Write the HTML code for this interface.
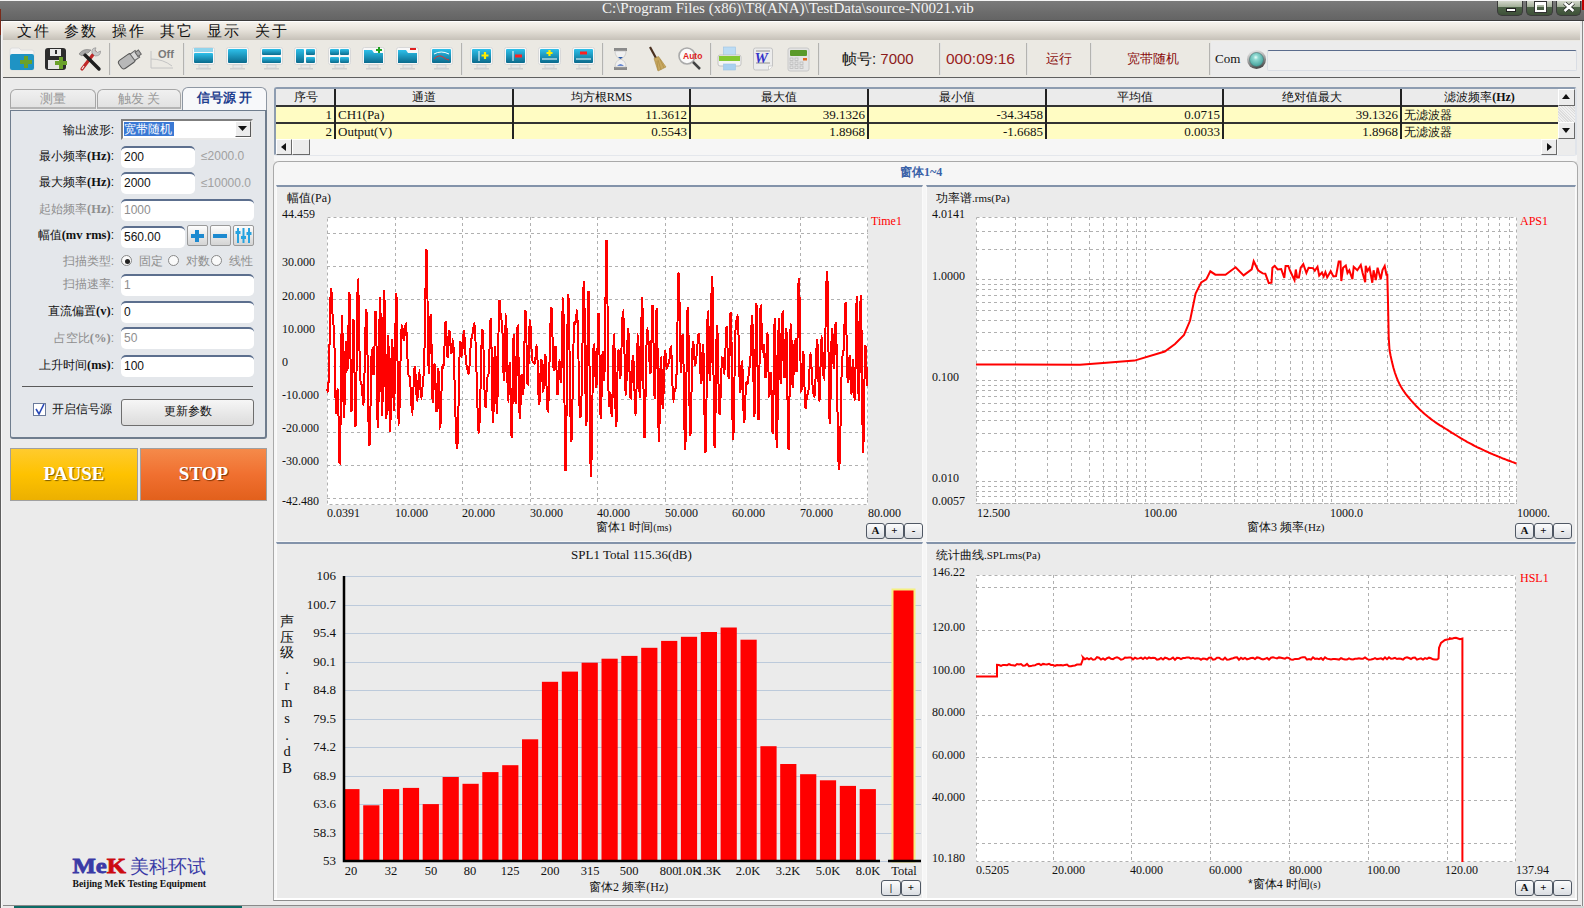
<!DOCTYPE html><html><head><meta charset="utf-8"><style>
html,body{margin:0;padding:0;width:1584px;height:908px;overflow:hidden;position:relative;font-family:"Liberation Sans",sans-serif}
div{box-sizing:content-box}
</style></head><body><div style="position:absolute;left:0px;top:0px;width:1584px;height:908px;background:#ebebeb"></div>
<div style="position:absolute;left:0px;top:0px;width:1584px;height:21px;background:linear-gradient(#7a7a7a,#6c6c6c 60%,#646464);border-top:1px solid #f4f4f4;box-sizing:border-box;border-bottom:1px solid #3c3c3c"></div>
<div style="position:absolute;left:602px;top:-1px;white-space:nowrap;font-family:'Liberation Serif', serif;font-size:15px;line-height:18px;color:#f4f4f4">C:\Program Files (x86)\T8(ANA)\TestData\source-N0021.vib</div>
<div style="position:absolute;left:1497px;top:1px;width:26px;height:15px;background:linear-gradient(#d2d6ca,#a4b09a 40%,#4e6448 42%,#3e5038 100%);border:1px solid #3a3a3a;border-top:none;border-radius:0 0 5px 5px;box-sizing:border-box"></div>
<div style="position:absolute;left:1526px;top:1px;width:27px;height:15px;background:linear-gradient(#d2d6ca,#a4b09a 40%,#4e6448 42%,#3e5038 100%);border:1px solid #3a3a3a;border-top:none;border-radius:0 0 5px 5px;box-sizing:border-box"></div>
<div style="position:absolute;left:1556px;top:1px;width:25px;height:15px;background:linear-gradient(#d2d6ca,#a4b09a 40%,#4e6448 42%,#3e5038 100%);border:1px solid #3a3a3a;border-top:none;border-radius:0 0 5px 5px;box-sizing:border-box"></div>
<div style="position:absolute;left:1506px;top:8px;width:10px;height:4px;background:#fff;border:1px solid #222;box-sizing:border-box"></div>
<div style="position:absolute;left:1535px;top:2px;width:11px;height:10px;border:2px solid #fff;border-top-width:3px;box-sizing:border-box;outline:1px solid #333"></div>
<svg style="position:absolute;left:1563px;top:2px" width="12" height="10"><path d="M1.5 1L10.5 9M10.5 1L1.5 9" stroke="#222" stroke-width="4"/><path d="M1.5 1L10.5 9M10.5 1L1.5 9" stroke="#fff" stroke-width="2.6"/></svg>
<div style="position:absolute;left:1582px;top:0px;width:2px;height:10px;background:#c00000"></div>
<div style="position:absolute;left:0px;top:21px;width:1px;height:887px;background:#5e5e5e"></div>
<div style="position:absolute;left:1px;top:21px;width:1px;height:887px;background:#f6f6f6"></div>
<div style="position:absolute;left:1582px;top:21px;width:1px;height:887px;background:#8a8a8a"></div>
<div style="position:absolute;left:1583px;top:21px;width:1px;height:887px;background:#f0f0f0"></div>
<div style="position:absolute;left:0px;top:9px;width:1px;height:26px;background:#7a2a1a"></div>
<div style="position:absolute;left:3px;top:21px;width:1577px;height:19px;background:linear-gradient(#f7f4ee,#e9e5dd 40%,#c6c1b8);border-top:1px solid #fff;box-sizing:border-box"></div>
<div style="position:absolute;left:17px;top:21px;white-space:nowrap;font-family:'Liberation Sans', sans-serif;font-size:15px;line-height:20px;letter-spacing:2px;color:#111">文件</div>
<div style="position:absolute;left:64px;top:21px;white-space:nowrap;font-family:'Liberation Sans', sans-serif;font-size:15px;line-height:20px;letter-spacing:2px;color:#111">参数</div>
<div style="position:absolute;left:112px;top:21px;white-space:nowrap;font-family:'Liberation Sans', sans-serif;font-size:15px;line-height:20px;letter-spacing:2px;color:#111">操作</div>
<div style="position:absolute;left:160px;top:21px;white-space:nowrap;font-family:'Liberation Sans', sans-serif;font-size:15px;line-height:20px;letter-spacing:2px;color:#111">其它</div>
<div style="position:absolute;left:207px;top:21px;white-space:nowrap;font-family:'Liberation Sans', sans-serif;font-size:15px;line-height:20px;letter-spacing:2px;color:#111">显示</div>
<div style="position:absolute;left:255px;top:21px;white-space:nowrap;font-family:'Liberation Sans', sans-serif;font-size:15px;line-height:20px;letter-spacing:2px;color:#111">关于</div>
<div style="position:absolute;left:3px;top:40px;width:1577px;height:37px;background:#ebe9e3"></div>
<div style="position:absolute;left:3px;top:77px;width:1577px;height:1px;background:#5f5f5f"></div>
<div style="position:absolute;left:1211px;top:41px;width:369px;height:36px;background:#ececec"></div>
<div style="position:absolute;left:109px;top:43px;width:2px;height:32px;background:linear-gradient(90deg,#9c9b97,#fbfbfb)"></div>
<div style="position:absolute;left:183px;top:43px;width:2px;height:32px;background:linear-gradient(90deg,#9c9b97,#fbfbfb)"></div>
<div style="position:absolute;left:461px;top:43px;width:2px;height:32px;background:linear-gradient(90deg,#9c9b97,#fbfbfb)"></div>
<div style="position:absolute;left:602px;top:43px;width:2px;height:32px;background:linear-gradient(90deg,#9c9b97,#fbfbfb)"></div>
<div style="position:absolute;left:710px;top:43px;width:2px;height:32px;background:linear-gradient(90deg,#9c9b97,#fbfbfb)"></div>
<div style="position:absolute;left:818px;top:43px;width:2px;height:32px;background:linear-gradient(90deg,#9c9b97,#fbfbfb)"></div>
<div style="position:absolute;left:939px;top:43px;width:2px;height:32px;background:linear-gradient(90deg,#9c9b97,#fbfbfb)"></div>
<div style="position:absolute;left:1026px;top:43px;width:2px;height:32px;background:linear-gradient(90deg,#9c9b97,#fbfbfb)"></div>
<div style="position:absolute;left:1090px;top:43px;width:2px;height:32px;background:linear-gradient(90deg,#9c9b97,#fbfbfb)"></div>
<div style="position:absolute;left:1209px;top:43px;width:2px;height:32px;background:linear-gradient(90deg,#9c9b97,#fbfbfb)"></div>
<svg style="position:absolute;left:9px;top:47px" width="28" height="24"><path d="M1 3Q1 1 3 1H10L12 3H23Q25 3 25 5V21Q25 23 23 23H3Q1 23 1 21Z" fill="#f4f4f4" stroke="#ddd"/><path d="M1 9Q1 7 3 7H23Q25 7 25 9V21Q25 23 23 23H3Q1 23 1 21Z" fill="#1f93c4"/><path d="M15 9H19V13H23V17H19V21H15V17H11V13H15Z" fill="#6aa12a"/></svg>
<svg style="position:absolute;left:44px;top:47px" width="26" height="24"><rect x="1" y="1" width="21" height="22" rx="3" fill="#2c2c2c"/><rect x="6" y="2" width="11" height="7" fill="#e8e8e8"/><rect x="11" y="3" width="2" height="4" fill="#2c2c2c"/><rect x="4" y="13" width="15" height="9" fill="#e4e4e4"/><path d="M15 10H19V14H23V18H19V22H15V18H11V14H15Z" fill="#6aa12a"/></svg>
<svg style="position:absolute;left:77px;top:47px" width="26" height="25"><path d="M18 5L5 22" stroke="#c02828" stroke-width="3.2" stroke-linecap="round"/><path d="M5 22L7 19" stroke="#f0f0f0" stroke-width="1.2"/><path d="M7 7L22 22" stroke="#1e1e1e" stroke-width="3.4" stroke-linecap="round"/><path d="M2 7Q6 1 14 3L11 6Q8 5 5 9Z" fill="#a8a8a8" stroke="#777" stroke-width="0.6"/><path d="M15 6Q14 1 19 0.8L18 3.5L20.5 5.5L23.5 4Q24 9 18 9Z" fill="#c8c8c8" stroke="#888" stroke-width="0.6"/></svg>
<svg style="position:absolute;left:116px;top:48px" width="28" height="22"><g transform="rotate(-35 14 11)"><rect x="2" y="6" width="16" height="10" rx="3" fill="#b8b8b8" stroke="#555"/><rect x="17" y="7" width="6" height="8" fill="#d8d8d8" stroke="#666"/><rect x="22" y="8.5" width="4" height="5" fill="#aaa" stroke="#666"/></g></svg>
<svg style="position:absolute;left:150px;top:48px" width="28" height="22"><path d="M1 3V20H23" stroke="#c4c4c4" fill="none"/><path d="M1 11Q13 11 22 18" stroke="#c4c4c4" fill="none"/><text x="8" y="10" font-family="Liberation Sans" font-weight="bold" font-size="11" fill="#7a7a7a">Off</text></svg>
<svg style="position:absolute;left:192px;top:47px" width="24" height="25" viewBox="0 0 24 25"><defs><linearGradient id="mg" x1="0" y1="0" x2="0" y2="1"><stop offset="0" stop-color="#2ec0ea"/><stop offset="1" stop-color="#0b6a8c"/></linearGradient></defs><rect x="0.5" y="0.5" width="22" height="17" rx="2" fill="#f8f8f8" stroke="#d8d8d8"/><rect x="2" y="6" width="19" height="10" rx="1" fill="url(#mg)"/><rect x="7" y="18" width="9" height="3" fill="#e8e8e8" stroke="#c8c8c8" stroke-width="0.6"/><rect x="4" y="21" width="15" height="1.5" fill="#d0d0d0"/><path d="M2 2H21M2 4H21" stroke="#2ab0e0" stroke-width="1"/></svg>
<svg style="position:absolute;left:226px;top:47px" width="24" height="25" viewBox="0 0 24 25"><defs><linearGradient id="mg" x1="0" y1="0" x2="0" y2="1"><stop offset="0" stop-color="#2ec0ea"/><stop offset="1" stop-color="#0b6a8c"/></linearGradient></defs><rect x="0.5" y="0.5" width="22" height="17" rx="2" fill="#f8f8f8" stroke="#d8d8d8"/><rect x="2" y="2" width="19" height="14" rx="1" fill="url(#mg)"/><rect x="7" y="18" width="9" height="3" fill="#e8e8e8" stroke="#c8c8c8" stroke-width="0.6"/><rect x="4" y="21" width="15" height="1.5" fill="#d0d0d0"/></svg>
<svg style="position:absolute;left:260px;top:47px" width="24" height="25" viewBox="0 0 24 25"><defs><linearGradient id="mg" x1="0" y1="0" x2="0" y2="1"><stop offset="0" stop-color="#2ec0ea"/><stop offset="1" stop-color="#0b6a8c"/></linearGradient></defs><rect x="0.5" y="0.5" width="22" height="17" rx="2" fill="#f8f8f8" stroke="#d8d8d8"/><rect x="2" y="2" width="19" height="6" rx="1" fill="url(#mg)"/><rect x="2" y="10" width="19" height="6" rx="1" fill="url(#mg)"/><rect x="7" y="18" width="9" height="3" fill="#e8e8e8" stroke="#c8c8c8" stroke-width="0.6"/><rect x="4" y="21" width="15" height="1.5" fill="#d0d0d0"/></svg>
<svg style="position:absolute;left:294px;top:47px" width="24" height="25" viewBox="0 0 24 25"><defs><linearGradient id="mg" x1="0" y1="0" x2="0" y2="1"><stop offset="0" stop-color="#2ec0ea"/><stop offset="1" stop-color="#0b6a8c"/></linearGradient></defs><rect x="0.5" y="0.5" width="22" height="17" rx="2" fill="#f8f8f8" stroke="#d8d8d8"/><rect x="2" y="2" width="8" height="14" rx="1" fill="url(#mg)"/><rect x="12" y="2" width="9" height="6" rx="1" fill="url(#mg)"/><rect x="12" y="10" width="9" height="6" rx="1" fill="url(#mg)"/><rect x="7" y="18" width="9" height="3" fill="#e8e8e8" stroke="#c8c8c8" stroke-width="0.6"/><rect x="4" y="21" width="15" height="1.5" fill="#d0d0d0"/></svg>
<svg style="position:absolute;left:328px;top:47px" width="24" height="25" viewBox="0 0 24 25"><defs><linearGradient id="mg" x1="0" y1="0" x2="0" y2="1"><stop offset="0" stop-color="#2ec0ea"/><stop offset="1" stop-color="#0b6a8c"/></linearGradient></defs><rect x="0.5" y="0.5" width="22" height="17" rx="2" fill="#f8f8f8" stroke="#d8d8d8"/><rect x="2" y="2" width="9" height="6" rx="1" fill="url(#mg)"/><rect x="12" y="2" width="9" height="6" rx="1" fill="url(#mg)"/><rect x="2" y="10" width="9" height="6" rx="1" fill="url(#mg)"/><rect x="12" y="10" width="9" height="6" rx="1" fill="url(#mg)"/><rect x="7" y="18" width="9" height="3" fill="#e8e8e8" stroke="#c8c8c8" stroke-width="0.6"/><rect x="4" y="21" width="15" height="1.5" fill="#d0d0d0"/></svg>
<svg style="position:absolute;left:362px;top:47px" width="24" height="25" viewBox="0 0 24 25"><defs><linearGradient id="mg" x1="0" y1="0" x2="0" y2="1"><stop offset="0" stop-color="#2ec0ea"/><stop offset="1" stop-color="#0b6a8c"/></linearGradient></defs><rect x="0.5" y="0.5" width="22" height="17" rx="2" fill="#f8f8f8" stroke="#d8d8d8"/><path d="M2 3H10L12 6H21V16H2Z" fill="url(#mg)"/><rect x="7" y="18" width="9" height="3" fill="#e8e8e8" stroke="#c8c8c8" stroke-width="0.6"/><rect x="4" y="21" width="15" height="1.5" fill="#d0d0d0"/><path d="M17 0V6M14 3H20" stroke="#20a020" stroke-width="2"/></svg>
<svg style="position:absolute;left:396px;top:47px" width="24" height="25" viewBox="0 0 24 25"><defs><linearGradient id="mg" x1="0" y1="0" x2="0" y2="1"><stop offset="0" stop-color="#2ec0ea"/><stop offset="1" stop-color="#0b6a8c"/></linearGradient></defs><rect x="0.5" y="0.5" width="22" height="17" rx="2" fill="#f8f8f8" stroke="#d8d8d8"/><path d="M2 3H10L12 6H21V16H2Z" fill="url(#mg)"/><rect x="7" y="18" width="9" height="3" fill="#e8e8e8" stroke="#c8c8c8" stroke-width="0.6"/><rect x="4" y="21" width="15" height="1.5" fill="#d0d0d0"/><path d="M14 2H20" stroke="#e02020" stroke-width="2"/></svg>
<svg style="position:absolute;left:430px;top:47px" width="24" height="25" viewBox="0 0 24 25"><defs><linearGradient id="mg" x1="0" y1="0" x2="0" y2="1"><stop offset="0" stop-color="#2ec0ea"/><stop offset="1" stop-color="#0b6a8c"/></linearGradient></defs><rect x="0.5" y="0.5" width="22" height="17" rx="2" fill="#f8f8f8" stroke="#d8d8d8"/><rect x="2" y="2" width="19" height="14" rx="1" fill="url(#mg)"/><rect x="7" y="18" width="9" height="3" fill="#e8e8e8" stroke="#c8c8c8" stroke-width="0.6"/><rect x="4" y="21" width="15" height="1.5" fill="#d0d0d0"/><path d="M4 7Q11 3 19 7" stroke="#fff" fill="none"/><path d="M4 12Q9 7 13 10T19 13" stroke="#e03030" fill="none"/></svg>
<svg style="position:absolute;left:470px;top:47px" width="24" height="25" viewBox="0 0 24 25"><defs><linearGradient id="mg" x1="0" y1="0" x2="0" y2="1"><stop offset="0" stop-color="#2ec0ea"/><stop offset="1" stop-color="#0b6a8c"/></linearGradient></defs><rect x="0.5" y="0.5" width="22" height="17" rx="2" fill="#f8f8f8" stroke="#d8d8d8"/><rect x="2" y="2" width="19" height="14" rx="1" fill="url(#mg)"/><rect x="7" y="18" width="9" height="3" fill="#e8e8e8" stroke="#c8c8c8" stroke-width="0.6"/><rect x="4" y="21" width="15" height="1.5" fill="#d0d0d0"/><path d="M9 4V14" stroke="#fff"/><path d="M15 5V12M11.5 8.5H18.5" stroke="#ffee00" stroke-width="2.2"/></svg>
<svg style="position:absolute;left:504px;top:47px" width="24" height="25" viewBox="0 0 24 25"><defs><linearGradient id="mg" x1="0" y1="0" x2="0" y2="1"><stop offset="0" stop-color="#2ec0ea"/><stop offset="1" stop-color="#0b6a8c"/></linearGradient></defs><rect x="0.5" y="0.5" width="22" height="17" rx="2" fill="#f8f8f8" stroke="#d8d8d8"/><rect x="2" y="2" width="19" height="14" rx="1" fill="url(#mg)"/><rect x="7" y="18" width="9" height="3" fill="#e8e8e8" stroke="#c8c8c8" stroke-width="0.6"/><rect x="4" y="21" width="15" height="1.5" fill="#d0d0d0"/><path d="M9 4V14" stroke="#fff"/><path d="M11 9H18" stroke="#ff2020" stroke-width="3"/></svg>
<svg style="position:absolute;left:538px;top:47px" width="24" height="25" viewBox="0 0 24 25"><defs><linearGradient id="mg" x1="0" y1="0" x2="0" y2="1"><stop offset="0" stop-color="#2ec0ea"/><stop offset="1" stop-color="#0b6a8c"/></linearGradient></defs><rect x="0.5" y="0.5" width="22" height="17" rx="2" fill="#f8f8f8" stroke="#d8d8d8"/><rect x="2" y="2" width="19" height="14" rx="1" fill="url(#mg)"/><rect x="7" y="18" width="9" height="3" fill="#e8e8e8" stroke="#c8c8c8" stroke-width="0.6"/><rect x="4" y="21" width="15" height="1.5" fill="#d0d0d0"/><path d="M4 12H19" stroke="#fff"/><path d="M11.5 3V9M8.5 6H14.5" stroke="#ffee00" stroke-width="2.2"/></svg>
<svg style="position:absolute;left:572px;top:47px" width="24" height="25" viewBox="0 0 24 25"><defs><linearGradient id="mg" x1="0" y1="0" x2="0" y2="1"><stop offset="0" stop-color="#2ec0ea"/><stop offset="1" stop-color="#0b6a8c"/></linearGradient></defs><rect x="0.5" y="0.5" width="22" height="17" rx="2" fill="#f8f8f8" stroke="#d8d8d8"/><rect x="2" y="2" width="19" height="14" rx="1" fill="url(#mg)"/><rect x="7" y="18" width="9" height="3" fill="#e8e8e8" stroke="#c8c8c8" stroke-width="0.6"/><rect x="4" y="21" width="15" height="1.5" fill="#d0d0d0"/><path d="M4 12H19" stroke="#fff"/><path d="M8 6H15" stroke="#ff2020" stroke-width="3"/></svg>
<svg style="position:absolute;left:612px;top:47px" width="18" height="24"><rect x="2" y="1" width="13" height="3" fill="#8a8a8a"/><rect x="2" y="20" width="13" height="3" fill="#8a8a8a"/><path d="M3 4H14Q14 10 8.5 12Q3 10 3 4ZM3 20H14Q14 14 8.5 12Q3 14 3 20Z" fill="#f0f0f0" stroke="#bbb" stroke-width="0.6"/><path d="M6 10H11L8.5 12Z" fill="#2a5aa8"/><path d="M5 19H12Q10 17 8.5 17Q7 17 5 19Z" fill="#6a8ad0"/></svg>
<svg style="position:absolute;left:646px;top:45px" width="22" height="27"><path d="M4 2L10.5 14" stroke="#4a3020" stroke-width="2.2"/><path d="M8 13.5L12.5 11.5L20 22L12 26Z" fill="#c8a860" stroke="#a88840" stroke-width="0.6"/><path d="M12 15L15 25M11 16L12 25M14 14L18 23" stroke="#a88840" stroke-width="0.6"/></svg>
<svg style="position:absolute;left:677px;top:46px" width="26" height="26"><circle cx="10" cy="10" r="8" fill="#fafafa" stroke="#aaa" stroke-width="1.6"/><path d="M16 16L23 23" stroke="#444" stroke-width="2.5"/><text x="6" y="13" font-family="Liberation Sans" font-weight="bold" font-size="8.5" fill="#e02020">Auto</text></svg>
<svg style="position:absolute;left:717px;top:46px" width="26" height="26"><rect x="6.5" y="1" width="12" height="9" fill="#bcdcf4" stroke="#9cc4e4" stroke-width="0.6"/><rect x="1" y="9" width="23" height="11" rx="2" fill="#f4f4f4" stroke="#b8b8b8" stroke-width="0.8"/><rect x="2" y="10" width="21" height="5" fill="#84c832"/><rect x="6.5" y="18" width="12" height="6" fill="#a8d0f0" stroke="#9cc4e4" stroke-width="0.6"/></svg>
<svg style="position:absolute;left:752px;top:47px" width="24" height="25"><path d="M1.5 3Q1.5 1 3.5 1H18.5Q20.5 1 20.5 3V19L16.5 23H3.5Q1.5 23 1.5 21Z" fill="#ececec" stroke="#c4c4c4"/><path d="M16.5 23V19H20.5" fill="#fff" stroke="#c4c4c4" stroke-width="0.8"/><path d="M4 4H18M4 16H18" stroke="#888" stroke-width="0.9"/><text x="2.5" y="15.5" font-family="Liberation Serif" font-style="italic" font-weight="bold" font-size="15" fill="#3434c8">W</text></svg>
<svg style="position:absolute;left:787px;top:47px" width="24" height="25"><rect x="1" y="1" width="21" height="23" rx="2" fill="#e4e4e4" stroke="#c8c8c8"/><rect x="3" y="3" width="17" height="6" rx="1" fill="#5a9a2a"/><g fill="none" stroke="#bbb" stroke-width="0.8"><rect x="3" y="11" width="3" height="2.5"/><rect x="8" y="11" width="3" height="2.5"/><rect x="3" y="15" width="3" height="2.5"/><rect x="8" y="15" width="3" height="2.5"/><rect x="13" y="15" width="3" height="2.5"/><rect x="3" y="19" width="3" height="2.5"/><rect x="8" y="19" width="3" height="2.5"/><rect x="13" y="19" width="3" height="2.5"/></g><rect x="16" y="11" width="4" height="2.5" fill="#e06a20"/></svg>
<div style="position:absolute;left:842px;top:49px;white-space:nowrap;font-family:'Liberation Sans', sans-serif;font-size:15px;line-height:20px;color:#111">帧号: <span style="color:#8b1a1a">7000</span></div>
<div style="position:absolute;left:946px;top:49px;white-space:nowrap;font-family:'Liberation Sans', sans-serif;font-size:15.5px;line-height:20px;color:#9a2222">000:09:16</div>
<div style="position:absolute;left:1046px;top:50px;white-space:nowrap;font-family:'Liberation Sans', sans-serif;font-size:13px;line-height:18px;color:#8a0c0c">运行</div>
<div style="position:absolute;left:1127px;top:50px;white-space:nowrap;font-family:'Liberation Sans', sans-serif;font-size:13px;line-height:18px;color:#8a0c0c">宽带随机</div>
<div style="position:absolute;left:1215px;top:51px;white-space:nowrap;font-family:'Liberation Serif', serif;font-size:13px;line-height:16px;color:#111">Com</div>
<svg style="position:absolute;left:1246px;top:49px" width="21" height="21"><defs><linearGradient id="ledr" x1="0" y1="0" x2="0.3" y2="1"><stop offset="0" stop-color="#f4f4f4"/><stop offset="0.5" stop-color="#b0b0b0"/><stop offset="1" stop-color="#505050"/></linearGradient><radialGradient id="ledc" cx="0.45" cy="0.35" r="0.7"><stop offset="0" stop-color="#e8fffc"/><stop offset="0.25" stop-color="#8ed8d0"/><stop offset="1" stop-color="#3a9a94"/></radialGradient></defs><circle cx="10.5" cy="10.5" r="9.5" fill="url(#ledr)"/><circle cx="10.5" cy="10.5" r="7" fill="url(#ledc)" stroke="#4a6a6a" stroke-width="0.6"/></svg>
<div style="position:absolute;left:1267px;top:50px;width:310px;height:21px;background:#efefef;border:1px solid #d9dde4;border-top:1px solid #5a6c8c;border-radius:2px;box-sizing:border-box"></div>
<div style="position:absolute;left:242px;top:906px;width:1342px;height:2px;background:#d4d4d4"></div>
<div style="position:absolute;left:14px;top:906px;width:228px;height:2px;background:#0d6b66"></div>
<div style="position:absolute;left:3px;top:905px;width:1578px;height:1px;background:#8a8a8a"></div>
<div style="position:absolute;left:10px;top:89px;width:86px;height:20px;background:linear-gradient(#f0f0f0,#e2e2e2);border:1px solid #a6a6a6;border-bottom:2px solid #b5b5b5;border-radius:6px 6px 0 0;box-sizing:border-box"></div>
<div style="position:absolute;left:10px;top:89px;width:86px;text-align:center;white-space:nowrap;font-family:'Liberation Sans', sans-serif;font-size:13px;line-height:20px;color:#9a9a9a">测量</div>
<div style="position:absolute;left:97px;top:89px;width:84px;height:20px;background:linear-gradient(#f0f0f0,#e2e2e2);border:1px solid #a6a6a6;border-bottom:2px solid #b5b5b5;border-radius:6px 6px 0 0;box-sizing:border-box"></div>
<div style="position:absolute;left:97px;top:89px;width:84px;text-align:center;white-space:nowrap;font-family:'Liberation Sans', sans-serif;font-size:13px;line-height:20px;color:#9a9a9a">触发 关</div>
<div style="position:absolute;left:182px;top:87px;width:85px;height:23px;background:#f7f8fa;border:1px solid #8e97a3;border-bottom:none;border-radius:6px 6px 0 0;box-sizing:border-box"></div>
<div style="position:absolute;left:182px;top:88px;width:85px;text-align:center;white-space:nowrap;font-family:'Liberation Sans', sans-serif;font-size:13px;line-height:20px;color:#1f3f8f;font-weight:bold">信号源 开</div>
<div style="position:absolute;left:10px;top:110px;width:257px;height:329px;background:#e4e7eb;border:1px solid #6f7d8e;border-right:2px solid #6f7d8e;border-bottom:2px solid #6f7d8e;border-radius:0 0 3px 3px;box-sizing:border-box"></div>
<div style="position:absolute;left:0px;top:122px;width:114px;text-align:right;white-space:nowrap;font-family:'Liberation Sans', sans-serif;font-size:12px;line-height:16px;color:#111">输出波形:</div>
<div style="position:absolute;left:121px;top:119px;width:132px;height:21px;background:#fff;border:2px solid #7f7f7f;border-right-color:#e8e8e8;border-bottom-color:#e8e8e8;box-sizing:border-box"></div>
<div style="position:absolute;left:124px;top:122px;width:50px;height:14px;background:#3a78d4"></div>
<div style="position:absolute;left:124px;top:121px;white-space:nowrap;font-family:'Liberation Sans', sans-serif;font-size:12px;line-height:16px;color:#fff">宽带随机</div>
<div style="position:absolute;left:235px;top:121px;width:16px;height:16px;background:#ececec;border:1px solid #fff;border-right-color:#5a5a5a;border-bottom-color:#5a5a5a;box-sizing:border-box"></div>
<svg style="position:absolute;left:238px;top:126px" width="10" height="6"><path d="M0 0H9L4.5 5Z" fill="#111"/></svg>
<div style="position:absolute;left:0px;top:148px;width:114px;text-align:right;white-space:nowrap;font-family:'Liberation Sans', sans-serif;font-size:12px;line-height:16px;color:#111">最小频率<span style="font-family:'Liberation Serif',serif;font-weight:bold;font-size:12.5px">(Hz)</span>:</div>
<div style="position:absolute;left:121px;top:146px;width:74px;height:22px;background:#fff;border-top:2px solid #5c6f8e;border-radius:5px;box-sizing:border-box"></div>
<div style="position:absolute;left:124px;top:149px;white-space:nowrap;font-family:'Liberation Sans', sans-serif;font-size:12px;line-height:16px;color:#111">200</div>
<div style="position:absolute;left:201px;top:148px;white-space:nowrap;font-family:'Liberation Sans', sans-serif;font-size:12px;line-height:16px;color:#a0a0a0">≤2000.0</div>
<div style="position:absolute;left:0px;top:174px;width:114px;text-align:right;white-space:nowrap;font-family:'Liberation Sans', sans-serif;font-size:12px;line-height:16px;color:#111">最大频率<span style="font-family:'Liberation Serif',serif;font-weight:bold;font-size:12.5px">(Hz)</span>:</div>
<div style="position:absolute;left:121px;top:172px;width:74px;height:22px;background:#fff;border-top:2px solid #5c6f8e;border-radius:5px;box-sizing:border-box"></div>
<div style="position:absolute;left:124px;top:175px;white-space:nowrap;font-family:'Liberation Sans', sans-serif;font-size:12px;line-height:16px;color:#111">2000</div>
<div style="position:absolute;left:201px;top:175px;white-space:nowrap;font-family:'Liberation Sans', sans-serif;font-size:12px;line-height:16px;color:#a0a0a0">≤10000.0</div>
<div style="position:absolute;left:0px;top:201px;width:114px;text-align:right;white-space:nowrap;font-family:'Liberation Sans', sans-serif;font-size:12px;line-height:16px;color:#8e8e8e">起始频率<span style="font-family:'Liberation Serif',serif;font-weight:bold;font-size:12.5px">(Hz)</span>:</div>
<div style="position:absolute;left:121px;top:199px;width:133px;height:22px;background:#fff;border-top:2px solid #5c6f8e;border-radius:5px;box-sizing:border-box"></div>
<div style="position:absolute;left:124px;top:202px;white-space:nowrap;font-family:'Liberation Sans', sans-serif;font-size:12px;line-height:16px;color:#8e8e8e">1000</div>
<div style="position:absolute;left:0px;top:227px;width:114px;text-align:right;white-space:nowrap;font-family:'Liberation Sans', sans-serif;font-size:12px;line-height:16px;color:#111">幅值<span style="font-family:'Liberation Serif',serif;font-weight:bold;font-size:12.5px">(mv rms)</span>:</div>
<div style="position:absolute;left:121px;top:226px;width:64px;height:22px;background:#fff;border-top:2px solid #5c6f8e;border-radius:5px;box-sizing:border-box"></div>
<div style="position:absolute;left:124px;top:229px;white-space:nowrap;font-family:'Liberation Sans', sans-serif;font-size:12px;line-height:16px;color:#111">560.00</div>
<div style="position:absolute;left:187px;top:225px;width:21px;height:21px;background:linear-gradient(#fdfdfd,#d4d4d4);border:1px solid #9a9a9a;border-radius:2px;box-sizing:border-box"></div>
<div style="position:absolute;left:210px;top:225px;width:21px;height:21px;background:linear-gradient(#fdfdfd,#d4d4d4);border:1px solid #9a9a9a;border-radius:2px;box-sizing:border-box"></div>
<div style="position:absolute;left:233px;top:225px;width:21px;height:21px;background:linear-gradient(#fdfdfd,#d4d4d4);border:1px solid #9a9a9a;border-radius:2px;box-sizing:border-box"></div>
<div style="position:absolute;left:191px;top:234px;width:13px;height:4px;background:#1d8ad0"></div>
<div style="position:absolute;left:195px;top:230px;width:4px;height:12px;background:#1d8ad0"></div>
<div style="position:absolute;left:213px;top:234px;width:14px;height:4px;background:#1d8ad0"></div>
<svg style="position:absolute;left:235px;top:227px" width="17" height="17"><g stroke="#27a3e0" stroke-width="2"><path d="M3 1V16M8.5 1V16M14 1V16"/></g><g fill="#27a3e0"><rect x="0.5" y="4" width="5" height="3"/><rect x="6" y="9" width="5" height="3"/><rect x="11.5" y="5" width="5" height="3"/></g></svg>
<div style="position:absolute;left:0px;top:253px;width:114px;text-align:right;white-space:nowrap;font-family:'Liberation Sans', sans-serif;font-size:12px;line-height:16px;color:#8e8e8e">扫描类型:</div>
<div style="position:absolute;left:121px;top:255px;width:11px;height:11px;background:#fafafa;border:1px solid #888;border-radius:50%;box-sizing:border-box"><div style="position:absolute;left:3px;top:3px;width:5px;height:5px;border-radius:50%;background:#222"></div></div>
<div style="position:absolute;left:139px;top:253px;white-space:nowrap;font-family:'Liberation Sans', sans-serif;font-size:12px;line-height:16px;color:#8e8e8e">固定</div>
<div style="position:absolute;left:168px;top:255px;width:11px;height:11px;background:#fafafa;border:1px solid #888;border-radius:50%;box-sizing:border-box"></div>
<div style="position:absolute;left:186px;top:253px;white-space:nowrap;font-family:'Liberation Sans', sans-serif;font-size:12px;line-height:16px;color:#8e8e8e">对数</div>
<div style="position:absolute;left:211px;top:255px;width:11px;height:11px;background:#fafafa;border:1px solid #888;border-radius:50%;box-sizing:border-box"></div>
<div style="position:absolute;left:229px;top:253px;white-space:nowrap;font-family:'Liberation Sans', sans-serif;font-size:12px;line-height:16px;color:#8e8e8e">线性</div>
<div style="position:absolute;left:0px;top:276px;width:114px;text-align:right;white-space:nowrap;font-family:'Liberation Sans', sans-serif;font-size:12px;line-height:16px;color:#8e8e8e">扫描速率:</div>
<div style="position:absolute;left:121px;top:274px;width:133px;height:22px;background:#fff;border-top:2px solid #5c6f8e;border-radius:5px;box-sizing:border-box"></div>
<div style="position:absolute;left:124px;top:277px;white-space:nowrap;font-family:'Liberation Sans', sans-serif;font-size:12px;line-height:16px;color:#8e8e8e">1</div>
<div style="position:absolute;left:0px;top:303px;width:114px;text-align:right;white-space:nowrap;font-family:'Liberation Sans', sans-serif;font-size:12px;line-height:16px;color:#111">直流偏置<span style="font-family:'Liberation Serif',serif;font-weight:bold;font-size:12.5px">(v)</span>:</div>
<div style="position:absolute;left:121px;top:301px;width:133px;height:22px;background:#fff;border-top:2px solid #5c6f8e;border-radius:5px;box-sizing:border-box"></div>
<div style="position:absolute;left:124px;top:304px;white-space:nowrap;font-family:'Liberation Sans', sans-serif;font-size:12px;line-height:16px;color:#111">0</div>
<div style="position:absolute;left:0px;top:330px;width:114px;text-align:right;white-space:nowrap;font-family:'Liberation Sans', sans-serif;font-size:12px;line-height:16px;color:#8e8e8e">占空比<span style="font-family:'Liberation Serif',serif;font-weight:bold;font-size:12.5px">(%)</span>:</div>
<div style="position:absolute;left:121px;top:327px;width:133px;height:22px;background:#fff;border-top:2px solid #5c6f8e;border-radius:5px;box-sizing:border-box"></div>
<div style="position:absolute;left:124px;top:330px;white-space:nowrap;font-family:'Liberation Sans', sans-serif;font-size:12px;line-height:16px;color:#8e8e8e">50</div>
<div style="position:absolute;left:0px;top:357px;width:114px;text-align:right;white-space:nowrap;font-family:'Liberation Sans', sans-serif;font-size:12px;line-height:16px;color:#111">上升时间<span style="font-family:'Liberation Serif',serif;font-weight:bold;font-size:12.5px">(ms)</span>:</div>
<div style="position:absolute;left:121px;top:355px;width:133px;height:22px;background:#fff;border-top:2px solid #5c6f8e;border-radius:5px;box-sizing:border-box"></div>
<div style="position:absolute;left:124px;top:358px;white-space:nowrap;font-family:'Liberation Sans', sans-serif;font-size:12px;line-height:16px;color:#111">100</div>
<div style="position:absolute;left:22px;top:386px;width:231px;height:1px;background:#5a5a5a"></div>
<div style="position:absolute;left:33px;top:403px;width:13px;height:13px;background:#fff;border:1px solid #6a7a9a;box-sizing:border-box"></div>
<svg style="position:absolute;left:35px;top:404px" width="10" height="11"><path d="M1 5L4 10L9 0" stroke="#2a4ab8" stroke-width="1.6" fill="none"/></svg>
<div style="position:absolute;left:52px;top:401px;white-space:nowrap;font-family:'Liberation Sans', sans-serif;font-size:12px;line-height:16px;color:#111">开启信号源</div>
<div style="position:absolute;left:121px;top:399px;width:133px;height:27px;background:linear-gradient(#f6f6f6,#dcdcdc);border:1px solid #6e6e6e;border-radius:3px;box-sizing:border-box"></div>
<div style="position:absolute;left:121px;top:403px;width:133px;text-align:center;white-space:nowrap;font-family:'Liberation Sans', sans-serif;font-size:12px;line-height:16px;color:#111">更新参数</div>
<div style="position:absolute;left:10px;top:448px;width:128px;height:53px;background:linear-gradient(#ffcb2e,#fec200 50%,#ecb000);border:1px solid #a0a0a0;box-sizing:border-box"></div>
<div style="position:absolute;left:10px;top:461px;width:128px;text-align:center;white-space:nowrap;font-family:'Liberation Serif', serif;font-weight:bold;font-size:19px;line-height:26px;color:#fff;text-shadow:1px 1px 1px #7a5a00">PAUSE</div>
<div style="position:absolute;left:140px;top:448px;width:127px;height:53px;background:linear-gradient(#f58a4a,#f07030 50%,#e2601c);border:1px solid #a0a0a0;box-sizing:border-box"></div>
<div style="position:absolute;left:140px;top:461px;width:127px;text-align:center;white-space:nowrap;font-family:'Liberation Serif', serif;font-weight:bold;font-size:19px;line-height:26px;color:#fff;text-shadow:1px 1px 1px #7a3000">STOP</div>
<svg style="position:absolute;left:70px;top:848px" width="145" height="45"><text x="2.5" y="25" font-family="Liberation Serif" font-weight="bold" font-size="22" textLength="53.5" lengthAdjust="spacingAndGlyphs" fill="#3a3aa6" stroke="#3a3aa6" stroke-width="0.8"><tspan>Me</tspan><tspan fill="#cc0a10" stroke="#cc0a10">K</tspan></text><text x="60" y="25" font-family="Liberation Serif" font-size="19" textLength="76" lengthAdjust="spacingAndGlyphs" fill="#3a3aa6">美科环试</text><text x="2.5" y="39" font-family="Liberation Serif" font-weight="bold" font-size="10.5" textLength="133.5" lengthAdjust="spacingAndGlyphs" fill="#111">Beijing MeK Testing Equipment</text></svg>
<div style="position:absolute;left:274px;top:155px;width:1303px;height:6px;background:#f6f6f6"></div>
<div style="position:absolute;left:274px;top:87px;width:1303px;height:69px;background:#f6f6f6;border:2px solid #8d9cb0;border-right-color:#e0e4ea;border-bottom-color:#e4e7ec;border-radius:3px;box-sizing:border-box"></div>
<div style="position:absolute;left:276px;top:89px;width:1282px;height:17px;background:#ebebeb"></div>
<div style="position:absolute;left:276px;top:106px;width:1282px;height:33px;background:#fffcc3"></div>
<div style="position:absolute;left:276px;top:89px;width:59px;text-align:center;white-space:nowrap;font-family:'Liberation Sans', sans-serif;font-size:12px;line-height:16px;color:#111">序号</div>
<div style="position:absolute;left:335px;top:89px;width:178px;text-align:center;white-space:nowrap;font-family:'Liberation Sans', sans-serif;font-size:12px;line-height:16px;color:#111">通道</div>
<div style="position:absolute;left:513px;top:89px;width:177px;text-align:center;white-space:nowrap;font-family:'Liberation Sans', sans-serif;font-size:12px;line-height:16px;color:#111">均方根<span style="font-family:'Liberation Serif',serif">RMS</span></div>
<div style="position:absolute;left:690px;top:89px;width:178px;text-align:center;white-space:nowrap;font-family:'Liberation Sans', sans-serif;font-size:12px;line-height:16px;color:#111">最大值</div>
<div style="position:absolute;left:868px;top:89px;width:178px;text-align:center;white-space:nowrap;font-family:'Liberation Sans', sans-serif;font-size:12px;line-height:16px;color:#111">最小值</div>
<div style="position:absolute;left:1046px;top:89px;width:177px;text-align:center;white-space:nowrap;font-family:'Liberation Sans', sans-serif;font-size:12px;line-height:16px;color:#111">平均值</div>
<div style="position:absolute;left:1223px;top:89px;width:178px;text-align:center;white-space:nowrap;font-family:'Liberation Sans', sans-serif;font-size:12px;line-height:16px;color:#111">绝对值最大</div>
<div style="position:absolute;left:1401px;top:89px;width:157px;text-align:center;white-space:nowrap;font-family:'Liberation Sans', sans-serif;font-size:12px;line-height:16px;color:#111">滤波频率<span style="font-family:'Liberation Serif',serif;font-weight:bold">(Hz)</span></div>
<div style="position:absolute;left:276px;top:105px;width:1282px;height:2px;background:#333"></div>
<div style="position:absolute;left:276px;top:122px;width:1282px;height:2px;background:#333"></div>
<div style="position:absolute;left:334px;top:89px;width:2px;height:50px;background:#222"></div>
<div style="position:absolute;left:512px;top:89px;width:2px;height:50px;background:#222"></div>
<div style="position:absolute;left:689px;top:89px;width:2px;height:50px;background:#222"></div>
<div style="position:absolute;left:867px;top:89px;width:2px;height:50px;background:#222"></div>
<div style="position:absolute;left:1045px;top:89px;width:2px;height:50px;background:#222"></div>
<div style="position:absolute;left:1222px;top:89px;width:2px;height:50px;background:#222"></div>
<div style="position:absolute;left:1400px;top:89px;width:2px;height:50px;background:#222"></div>
<div style="position:absolute;left:276px;top:107px;width:56px;text-align:right;white-space:nowrap;font-family:'Liberation Serif', serif;font-size:13px;line-height:16px;color:#111">1</div>
<div style="position:absolute;left:338px;top:107px;white-space:nowrap;font-family:'Liberation Serif', serif;font-size:13px;line-height:16px;color:#111">CH1(Pa)</div>
<div style="position:absolute;left:513px;top:107px;width:174px;text-align:right;white-space:nowrap;font-family:'Liberation Serif', serif;font-size:13px;line-height:16px;color:#111">11.3612</div>
<div style="position:absolute;left:690px;top:107px;width:175px;text-align:right;white-space:nowrap;font-family:'Liberation Serif', serif;font-size:13px;line-height:16px;color:#111">39.1326</div>
<div style="position:absolute;left:868px;top:107px;width:175px;text-align:right;white-space:nowrap;font-family:'Liberation Serif', serif;font-size:13px;line-height:16px;color:#111">-34.3458</div>
<div style="position:absolute;left:1046px;top:107px;width:174px;text-align:right;white-space:nowrap;font-family:'Liberation Serif', serif;font-size:13px;line-height:16px;color:#111">0.0715</div>
<div style="position:absolute;left:1223px;top:107px;width:175px;text-align:right;white-space:nowrap;font-family:'Liberation Serif', serif;font-size:13px;line-height:16px;color:#111">39.1326</div>
<div style="position:absolute;left:1404px;top:107px;white-space:nowrap;font-family:'Liberation Sans', sans-serif;font-size:12px;line-height:16px;color:#111">无滤波器</div>
<div style="position:absolute;left:276px;top:124px;width:56px;text-align:right;white-space:nowrap;font-family:'Liberation Serif', serif;font-size:13px;line-height:16px;color:#111">2</div>
<div style="position:absolute;left:338px;top:124px;white-space:nowrap;font-family:'Liberation Serif', serif;font-size:13px;line-height:16px;color:#111">Output(V)</div>
<div style="position:absolute;left:513px;top:124px;width:174px;text-align:right;white-space:nowrap;font-family:'Liberation Serif', serif;font-size:13px;line-height:16px;color:#111">0.5543</div>
<div style="position:absolute;left:690px;top:124px;width:175px;text-align:right;white-space:nowrap;font-family:'Liberation Serif', serif;font-size:13px;line-height:16px;color:#111">1.8968</div>
<div style="position:absolute;left:868px;top:124px;width:175px;text-align:right;white-space:nowrap;font-family:'Liberation Serif', serif;font-size:13px;line-height:16px;color:#111">-1.6685</div>
<div style="position:absolute;left:1046px;top:124px;width:174px;text-align:right;white-space:nowrap;font-family:'Liberation Serif', serif;font-size:13px;line-height:16px;color:#111">0.0033</div>
<div style="position:absolute;left:1223px;top:124px;width:175px;text-align:right;white-space:nowrap;font-family:'Liberation Serif', serif;font-size:13px;line-height:16px;color:#111">1.8968</div>
<div style="position:absolute;left:1404px;top:124px;white-space:nowrap;font-family:'Liberation Sans', sans-serif;font-size:12px;line-height:16px;color:#111">无滤波器</div>
<div style="position:absolute;left:1558px;top:89px;width:17px;height:50px;background:repeating-linear-gradient(45deg,#f0f0f0 0 1px,#dcdcdc 1px 2px)"></div>
<div style="position:absolute;left:1558px;top:89px;width:17px;height:17px;background:#ececec;border:1px solid #fff;border-right-color:#6a6a6a;border-bottom-color:#6a6a6a;box-sizing:border-box"></div>
<svg style="position:absolute;left:1558px;top:89px" width="17" height="17"><path d="M4 10H12L8 5Z" fill="#111"/></svg>
<div style="position:absolute;left:1558px;top:122px;width:17px;height:17px;background:#ececec;border:1px solid #fff;border-right-color:#6a6a6a;border-bottom-color:#6a6a6a;box-sizing:border-box"></div>
<svg style="position:absolute;left:1558px;top:122px" width="17" height="17"><path d="M4 6H12L8 11Z" fill="#111"/></svg>
<div style="position:absolute;left:276px;top:139px;width:1282px;height:16px;background:#f6f6f6"></div>
<div style="position:absolute;left:276px;top:139px;width:16px;height:16px;background:#ececec;border:1px solid #fff;border-right-color:#6a6a6a;border-bottom-color:#6a6a6a;box-sizing:border-box"></div>
<svg style="position:absolute;left:276px;top:139px" width="16" height="16"><path d="M10 4V12L5 8Z" fill="#111"/></svg>
<div style="position:absolute;left:292px;top:139px;width:18px;height:16px;background:#ececec;border:1px solid #fff;border-right-color:#6a6a6a;border-bottom-color:#6a6a6a;box-sizing:border-box"></div>
<div style="position:absolute;left:1541px;top:139px;width:16px;height:16px;background:#ececec;border:1px solid #fff;border-right-color:#6a6a6a;border-bottom-color:#6a6a6a;box-sizing:border-box"></div>
<svg style="position:absolute;left:1541px;top:139px" width="16" height="16"><path d="M6 4V12L11 8Z" fill="#111"/></svg>
<div style="position:absolute;left:1558px;top:139px;width:17px;height:16px;background:#ececec"></div>
<div style="position:absolute;left:273px;top:161px;width:1305px;height:740px;background:#f6f6f6;border:1px solid #a9a9a9;border-bottom:1px solid #8c8c8c;border-radius:6px 6px 0 0;box-sizing:border-box"></div>
<div style="position:absolute;left:900px;top:163px;white-space:nowrap;font-family:'Liberation Sans', sans-serif;font-size:12px;line-height:18px;color:#3a62a8;font-weight:bold">窗体<span style="font-family:Liberation Serif,serif">1~4</span></div>
<div style="position:absolute;left:276px;top:185px;width:647px;height:356px;background:#ebebeb;border-top:2px solid #8393aa;border-left:1px solid #fafafa;border-right:1px solid #fafafa;box-sizing:border-box"></div>
<div style="position:absolute;left:287px;top:190px;white-space:nowrap;font-family:'Liberation Sans', sans-serif;font-size:12px;line-height:16px;color:#111">幅值<span style="font-family:Liberation Serif,serif;font-size:12px">(Pa)</span></div>
<svg style="position:absolute;left:327px;top:217px;overflow:visible" width="541" height="288" viewBox="0 0 541 288"><rect x="0" y="0" width="541" height="288" fill="#fff"/><path d="M0 281.5H541 M0 248.5H541 M0 215.5H541 M0 182.5H541 M0 149.5H541 M0 116.5H541 M0 82.5H541 M0 49.5H541 M0 16.5H541 M68.5 0V288 M135.5 0V288 M203.5 0V288 M270.5 0V288 M338.5 0V288 M405.5 0V288 M473.5 0V288 M0.5 0.5H540.5V287.5H0.5Z" stroke="#b0b0b0" stroke-width="1" stroke-dasharray="3 3" fill="none"/><polyline points="0.2,172.0 0.5,173.7 0.7,174.1 1.0,173.2 1.3,170.6 1.5,165.9 1.8,158.8 2.0,149.1 2.3,137.2 2.6,123.8 2.8,109.8 3.1,96.5 3.4,85.1 3.6,76.7 3.9,71.9 4.2,70.9 4.4,73.4 4.7,78.3 5.0,84.7 5.2,91.3 5.5,97.0 5.7,101.4 6.0,104.4 6.3,106.3 6.5,108.2 6.8,111.2 7.1,116.1 7.3,123.7 7.6,134.1 7.9,146.8 8.1,160.6 8.4,174.0 8.6,185.3 8.9,193.2 9.2,196.7 9.4,195.7 9.7,191.1 10.0,184.4 10.2,177.5 10.5,172.7 10.8,171.7 11.0,175.8 11.3,185.1 11.5,198.5 11.8,214.2 12.1,229.5 12.3,241.5 12.6,247.4 12.9,245.6 13.1,235.1 13.4,216.9 13.7,192.7 13.9,165.8 14.2,139.7 14.5,117.9 14.7,103.4 15.0,98.1 15.2,102.2 15.5,114.7 15.8,133.1 16.0,154.2 16.3,174.4 16.6,190.3 16.8,199.6 17.1,201.1 17.4,195.1 17.6,183.0 17.9,167.4 18.1,151.3 18.4,137.5 18.7,128.2 18.9,124.5 19.2,126.3 19.5,132.4 19.7,140.5 20.0,148.0 20.3,152.4 20.5,152.0 20.8,145.8 21.1,134.3 21.3,119.1 21.6,102.7 21.8,88.0 22.1,78.0 22.4,74.8 22.6,79.6 22.9,92.2 23.2,111.0 23.4,133.4 23.7,156.1 24.0,175.7 24.2,189.2 24.5,194.8 24.7,191.6 25.0,180.7 25.3,163.9 25.5,144.5 25.8,125.8 26.1,111.2 26.3,103.3 26.6,103.5 26.9,112.0 27.1,127.6 27.4,147.8 27.7,169.3 27.9,188.9 28.2,203.3 28.4,210.2 28.7,208.3 29.0,197.7 29.2,179.8 29.5,156.6 29.8,131.3 30.0,106.8 30.3,85.9 30.6,71.0 30.8,63.2 31.1,62.8 31.3,69.1 31.6,80.8 31.9,95.8 32.1,112.2 32.4,127.9 32.7,141.5 32.9,152.2 33.2,159.5 33.5,163.8 33.7,165.8 34.0,166.4 34.2,166.7 34.5,167.5 34.8,169.4 35.0,172.3 35.3,176.2 35.6,180.5 35.8,184.3 36.1,186.9 36.4,187.3 36.6,185.1 36.9,179.9 37.2,171.8 37.4,161.2 37.7,148.7 37.9,135.3 38.2,122.2 38.5,110.3 38.7,100.9 39.0,94.8 39.3,92.6 39.5,94.8 39.8,101.5 40.1,112.3 40.3,126.5 40.6,143.4 40.8,161.6 41.1,180.0 41.4,197.0 41.6,211.5 41.9,222.2 42.2,228.2 42.4,229.2 42.7,225.2 43.0,216.6 43.2,204.3 43.5,189.8 43.8,174.5 44.0,159.9 44.3,147.7 44.5,138.9 44.8,134.1 45.1,133.5 45.3,136.4 45.6,141.7 45.9,148.1 46.1,153.8 46.4,157.3 46.7,157.3 46.9,153.3 47.2,145.4 47.4,134.3 47.7,121.6 48.0,109.3 48.2,99.6 48.5,94.3 48.8,95.1 49.0,102.4 49.3,116.1 49.6,134.6 49.8,155.8 50.1,176.8 50.3,194.7 50.6,206.6 50.9,210.7 51.1,206.0 51.4,192.8 51.7,172.9 51.9,148.9 52.2,124.2 52.5,102.6 52.7,87.2 53.0,80.3 53.3,83.1 53.5,95.0 53.8,114.2 54.0,137.5 54.3,161.2 54.6,181.4 54.8,194.7 55.1,199.0 55.4,193.3 55.6,178.5 55.9,156.9 56.2,131.9 56.4,107.5 56.7,87.7 56.9,75.6 57.2,73.2 57.5,80.9 57.7,97.4 58.0,120.2 58.3,145.5 58.5,169.5 58.8,188.6 59.1,199.9 59.3,202.2 59.6,195.7 59.9,182.1 60.1,164.3 60.4,145.7 60.6,130.0 60.9,120.1 61.2,117.9 61.4,123.9 61.7,137.2 62.0,155.4 62.2,175.4 62.5,193.9 62.8,207.7 63.0,214.5 63.3,213.3 63.5,204.4 63.8,189.4 64.1,171.0 64.3,152.3 64.6,136.4 64.9,126.0 65.1,122.5 65.4,126.3 65.7,136.4 65.9,150.8 66.2,166.6 66.5,180.8 66.7,190.6 67.0,194.0 67.2,190.0 67.5,178.8 67.8,161.6 68.0,140.9 68.3,119.3 68.6,99.8 68.8,85.0 69.1,76.8 69.4,76.2 69.6,83.2 69.9,96.7 70.1,115.0 70.4,135.9 70.7,157.0 70.9,176.2 71.2,191.5 71.5,201.9 71.7,206.7 72.0,206.2 72.3,200.8 72.5,191.6 72.8,179.8 73.0,166.6 73.3,153.3 73.6,140.7 73.8,129.8 74.1,120.9 74.4,114.4 74.6,110.3 74.9,108.5 75.2,108.6 75.4,110.4 75.7,113.1 76.0,116.3 76.2,119.3 76.5,121.7 76.7,123.0 77.0,123.0 77.3,121.7 77.5,119.2 77.8,115.9 78.1,112.5 78.3,109.5 78.6,107.6 78.9,107.3 79.1,108.9 79.4,112.5 79.6,117.8 79.9,124.5 80.2,131.8 80.4,139.1 80.7,145.8 81.0,151.3 81.2,155.3 81.5,157.8 81.8,159.0 82.0,159.3 82.3,159.3 82.6,159.6 82.8,160.7 83.1,163.0 83.3,166.5 83.6,171.2 83.9,176.7 84.1,182.4 84.4,187.7 84.7,192.0 84.9,194.6 85.2,195.3 85.5,193.7 85.7,190.1 86.0,184.7 86.2,178.1 86.5,170.8 86.8,163.7 87.0,157.4 87.3,152.6 87.6,149.7 87.8,149.0 88.1,150.5 88.4,154.0 88.6,159.0 88.9,164.9 89.2,170.9 89.4,176.4 89.7,180.6 89.9,183.0 90.2,183.3 90.5,181.6 90.7,178.0 91.0,173.2 91.3,167.9 91.5,162.8 91.8,158.7 92.1,156.2 92.3,155.7 92.6,157.2 92.8,160.4 93.1,164.9 93.4,169.8 93.6,174.3 93.9,177.9 94.2,180.0 94.4,180.5 94.7,179.3 95.0,177.0 95.2,173.9 95.5,170.6 95.7,167.5 96.0,164.8 96.3,162.1 96.5,159.1 96.8,154.9 97.1,148.7 97.3,139.8 97.6,127.8 97.9,112.9 98.1,95.7 98.4,77.5 98.7,60.2 98.9,45.7 99.2,35.8 99.4,32.1 99.7,35.5 100.0,45.7 100.2,61.9 100.5,82.1 100.8,103.9 101.0,124.5 101.3,141.3 101.6,152.4 101.8,156.7 102.1,154.1 102.3,145.7 102.6,133.4 102.9,119.9 103.1,107.9 103.4,99.7 103.7,97.1 103.9,100.9 104.2,110.6 104.5,124.8 104.7,141.5 105.0,158.1 105.3,172.3 105.5,182.0 105.8,186.2 106.0,185.0 106.3,179.0 106.6,170.1 106.8,160.5 107.1,152.3 107.4,147.3 107.6,146.6 107.9,150.6 108.2,158.3 108.4,168.5 108.7,179.1 108.9,188.1 109.2,193.8 109.5,195.2 109.7,192.0 110.0,185.0 110.3,175.6 110.5,165.6 110.8,157.1 111.1,151.8 111.3,150.9 111.6,154.7 111.8,162.7 112.1,173.6 112.4,185.6 112.6,196.7 112.9,205.0 113.2,209.4 113.4,209.0 113.7,204.3 114.0,195.9 114.2,185.5 114.5,174.4 114.8,164.5 115.0,156.6 115.3,151.5 115.5,149.1 115.8,148.7 116.1,149.2 116.3,149.5 116.6,148.4 116.9,145.3 117.1,139.8 117.4,132.5 117.7,124.1 117.9,116.0 118.2,109.2 118.4,105.0 118.7,104.0 119.0,106.4 119.2,111.5 119.5,118.7 119.8,126.4 120.0,133.5 120.3,138.6 120.6,141.1 120.8,140.6 121.1,137.3 121.4,132.2 121.6,126.1 121.9,120.4 122.1,116.1 122.4,113.9 122.7,114.2 122.9,116.7 123.2,120.9 123.5,125.8 123.7,130.6 124.0,134.2 124.3,136.2 124.5,136.2 124.8,134.4 125.0,131.5 125.3,128.2 125.6,125.3 125.8,123.9 126.1,124.4 126.4,127.3 126.6,132.6 126.9,140.0 127.2,149.0 127.4,159.1 127.7,169.6 128.0,180.1 128.2,190.1 128.5,199.5 128.7,208.0 129.0,215.5 129.3,221.9 129.5,226.9 129.8,230.2 130.1,231.4 130.3,230.0 130.6,225.7 130.9,218.5 131.1,208.6 131.4,196.4 131.6,182.7 131.9,168.6 132.2,155.1 132.4,143.4 132.7,134.3 133.0,128.2 133.2,125.3 133.5,125.3 133.8,127.3 134.0,130.6 134.3,134.0 134.5,136.6 134.8,137.8 135.1,137.1 135.3,134.6 135.6,130.7 135.9,126.1 136.1,121.5 136.4,117.7 136.7,115.4 136.9,114.9 137.2,116.3 137.5,119.3 137.7,123.6 138.0,128.6 138.2,133.6 138.5,138.2 138.8,142.0 139.0,145.0 139.3,147.1 139.6,148.7 139.8,149.9 140.1,151.1 140.4,152.3 140.6,153.7 140.9,155.1 141.1,156.2 141.4,156.8 141.7,156.5 141.9,155.2 142.2,152.7 142.5,149.3 142.7,145.0 143.0,140.3 143.3,135.6 143.5,131.3 143.8,127.6 144.1,124.7 144.3,122.6 144.6,121.1 144.8,120.0 145.1,119.1 145.4,118.0 145.6,116.6 145.9,114.8 146.2,112.7 146.4,110.6 146.7,108.7 147.0,107.3 147.2,106.9 147.5,107.6 147.7,109.6 148.0,113.1 148.3,118.0 148.5,124.2 148.8,131.5 149.1,139.8 149.3,148.8 149.6,158.2 149.9,167.9 150.1,177.5 150.4,186.8 150.6,195.4 150.9,202.9 151.2,208.9 151.4,213.2 151.7,215.2 152.0,215.0 152.2,212.2 152.5,207.0 152.8,199.6 153.0,190.4 153.3,179.7 153.6,168.2 153.8,156.4 154.1,145.0 154.3,134.6 154.6,125.7 154.9,118.9 155.1,114.4 155.4,112.6 155.7,113.5 155.9,117.2 156.2,123.5 156.5,131.9 156.7,141.8 157.0,152.6 157.2,163.3 157.5,173.0 157.8,181.1 158.0,186.7 158.3,189.7 158.6,189.8 158.8,187.4 159.1,183.1 159.4,177.7 159.6,172.1 159.9,167.0 160.2,163.2 160.4,160.7 160.7,159.6 160.9,159.2 161.2,158.8 161.5,157.5 161.7,154.5 162.0,149.2 162.3,141.7 162.5,132.3 162.8,122.1 163.1,112.6 163.3,105.2 163.6,101.6 163.8,102.8 164.1,109.5 164.4,121.3 164.6,137.2 164.9,155.3 165.2,173.5 165.4,189.2 165.7,200.5 166.0,205.6 166.2,204.2 166.5,196.4 166.8,183.8 167.0,168.4 167.3,152.9 167.5,139.8 167.8,131.3 168.1,128.9 168.3,132.7 168.6,142.1 168.9,155.3 169.1,170.0 169.4,183.4 169.7,193.1 169.9,197.2 170.2,194.8 170.4,185.8 170.7,171.4 171.0,153.5 171.2,134.2 171.5,116.1 171.8,100.9 172.0,90.1 172.3,84.1 172.6,82.7 172.8,84.7 173.1,88.8 173.3,93.5 173.6,97.7 173.9,100.6 174.1,102.0 174.4,102.7 174.7,103.4 174.9,105.3 175.2,109.2 175.5,115.7 175.7,124.7 176.0,135.3 176.3,146.1 176.5,155.5 176.8,161.8 177.0,163.7 177.3,160.5 177.6,152.5 177.8,140.8 178.1,127.3 178.4,114.3 178.6,104.1 178.9,98.7 179.2,99.2 179.4,106.0 179.7,118.0 179.9,133.6 180.2,150.2 180.5,165.5 180.7,177.0 181.0,183.2 181.3,183.6 181.5,178.7 181.8,170.2 182.1,160.3 182.3,151.6 182.6,146.4 182.9,146.4 183.1,152.1 183.4,163.2 183.6,177.8 183.9,193.6 184.2,207.6 184.4,217.4 184.7,220.8 185.0,216.8 185.2,205.8 185.5,189.2 185.8,169.5 186.0,149.7 186.3,132.9 186.5,121.5 186.8,117.1 187.1,120.1 187.3,129.5 187.6,143.4 187.9,158.8 188.1,173.0 188.4,183.0 188.7,187.1 188.9,184.3 189.2,175.3 189.5,161.4 189.7,145.1 190.0,129.4 190.2,116.9 190.5,109.9 190.8,109.6 191.0,116.1 191.3,128.4 191.6,144.6 191.8,162.3 192.1,178.7 192.4,191.7 192.6,199.6 192.9,201.8 193.1,198.7 193.4,191.4 193.7,181.7 193.9,171.8 194.2,163.6 194.5,158.5 194.7,157.1 195.0,159.2 195.3,163.9 195.5,169.7 195.8,174.8 196.0,177.4 196.3,176.2 196.6,170.7 196.8,160.9 197.1,147.7 197.4,132.8 197.6,118.1 197.9,105.5 198.2,96.7 198.4,93.0 198.7,94.7 199.0,101.5 199.2,112.3 199.5,125.6 199.7,139.4 200.0,151.7 200.3,161.0 200.5,166.2 200.8,166.6 201.1,162.5 201.3,154.6 201.6,144.3 201.9,132.9 202.1,122.0 202.4,112.9 202.6,106.6 202.9,103.5 203.2,103.8 203.4,106.9 203.7,112.1 204.0,118.5 204.2,125.2 204.5,131.5 204.8,136.6 205.0,140.4 205.3,142.9 205.6,144.2 205.8,144.7 206.1,144.9 206.3,145.1 206.6,145.4 206.9,146.0 207.1,146.6 207.4,146.9 207.7,146.7 207.9,145.6 208.2,143.5 208.5,140.6 208.7,137.1 209.0,133.5 209.2,130.6 209.5,129.1 209.8,129.6 210.0,132.5 210.3,137.9 210.6,145.5 210.8,154.7 211.1,164.5 211.4,173.8 211.6,181.5 211.9,186.5 212.1,188.2 212.4,186.4 212.7,181.5 212.9,174.1 213.2,165.4 213.5,156.7 213.7,149.3 214.0,144.2 214.3,142.1 214.5,143.2 214.8,147.1 215.1,153.1 215.3,159.9 215.6,166.4 215.8,171.3 216.1,173.8 216.4,173.4 216.6,170.0 216.9,164.3 217.2,157.1 217.4,149.7 217.7,143.2 218.0,138.8 218.2,137.2 218.5,138.8 218.7,143.4 219.0,150.5 219.3,159.3 219.5,168.8 219.8,177.8 220.1,185.4 220.3,190.9 220.6,193.8 220.9,194.0 221.1,191.5 221.4,186.6 221.7,179.6 221.9,170.9 222.2,160.9 222.4,149.9 222.7,138.5 223.0,127.0 223.2,116.0 223.5,106.1 223.8,98.1 224.0,92.6 224.3,90.1 224.6,91.0 224.8,95.3 225.1,102.6 225.3,112.2 225.6,122.9 225.9,133.5 226.1,142.7 226.4,149.4 226.7,152.9 226.9,153.0 227.2,150.0 227.5,144.8 227.7,138.7 228.0,133.2 228.3,129.6 228.5,128.8 228.8,131.4 229.0,137.3 229.3,145.7 229.6,155.4 229.8,164.8 230.1,172.4 230.4,177.1 230.6,178.1 230.9,175.5 231.2,169.9 231.4,162.5 231.7,154.8 231.9,148.3 232.2,144.4 232.5,143.8 232.7,146.3 233.0,151.3 233.3,157.3 233.5,162.7 233.8,165.5 234.1,164.4 234.3,158.6 234.6,148.0 234.8,133.6 235.1,117.4 235.4,101.6 235.6,88.9 235.9,81.8 236.2,82.1 236.4,90.5 236.7,107.0 237.0,130.1 237.2,157.5 237.5,186.1 237.8,212.9 238.0,234.6 238.3,248.9 238.5,254.3 238.8,250.2 239.1,237.4 239.3,217.3 239.6,192.4 239.9,165.2 240.1,138.5 240.4,114.8 240.7,96.0 240.9,83.3 241.2,77.5 241.4,78.4 241.7,85.5 242.0,97.8 242.2,114.0 242.5,132.6 242.8,152.4 243.0,171.8 243.3,189.5 243.6,204.5 243.8,215.8 244.1,222.5 244.4,224.5 244.6,221.4 244.9,213.8 245.1,202.3 245.4,187.8 245.7,171.8 245.9,155.6 246.2,140.4 246.5,127.5 246.7,117.5 247.0,110.6 247.3,106.8 247.5,105.4 247.8,105.4 248.0,106.1 248.3,106.4 248.6,105.9 248.8,104.1 249.1,101.5 249.4,98.4 249.6,95.9 249.9,94.8 250.2,95.9 250.4,99.9 250.7,107.0 250.9,116.9 251.2,129.0 251.5,142.4 251.7,156.0 252.0,168.8 252.3,180.0 252.5,188.9 252.8,195.3 253.1,199.1 253.3,200.6 253.6,199.8 253.9,197.0 254.1,192.1 254.4,185.0 254.6,175.5 254.9,163.5 255.2,149.0 255.4,132.4 255.7,114.7 256.0,97.2 256.2,81.7 256.5,70.0 256.8,63.9 257.0,64.8 257.3,73.2 257.5,88.9 257.8,110.3 258.1,135.3 258.3,160.7 258.6,183.5 258.9,200.4 259.1,209.2 259.4,208.5 259.7,198.2 259.9,179.8 260.2,155.8 260.5,129.6 260.7,105.1 261.0,85.9 261.2,74.9 261.5,73.9 261.8,83.3 262.0,102.2 262.3,128.2 262.6,158.3 262.8,189.1 263.1,217.0 263.4,239.4 263.6,254.1 263.9,260.3 264.1,258.2 264.4,248.9 264.7,234.2 264.9,216.2 265.2,196.9 265.5,178.3 265.7,161.8 266.0,148.2 266.3,138.2 266.5,131.6 266.8,128.4 267.1,128.1 267.3,130.5 267.6,135.0 267.8,141.1 268.1,148.3 268.4,155.7 268.6,162.5 268.9,167.8 269.2,170.4 269.4,169.7 269.7,165.2 270.0,156.9 270.2,145.4 270.5,132.0 270.7,118.5 271.0,106.9 271.3,99.0 271.5,96.4 271.8,100.0 272.1,109.8 272.3,124.7 272.6,143.1 272.9,162.4 273.1,180.0 273.4,193.4 273.6,200.9 273.9,201.7 274.2,195.9 274.4,185.0 274.7,171.1 275.0,156.9 275.2,144.8 275.5,136.9 275.8,134.3 276.0,137.0 276.3,143.6 276.6,152.1 276.8,159.7 277.1,163.7 277.3,161.8 277.6,152.9 277.9,136.9 278.1,115.2 278.4,90.1 278.7,65.1 278.9,43.6 279.2,28.7 279.5,22.6 279.7,26.5 280.0,39.8 280.2,61.0 280.5,87.1 280.8,114.8 281.0,141.0 281.3,162.8 281.6,178.4 281.8,187.2 282.1,189.8 282.4,187.8 282.6,183.4 282.9,178.7 283.2,175.8 283.4,175.8 283.7,179.0 283.9,184.6 284.2,191.2 284.5,197.0 284.7,199.9 285.0,198.6 285.3,192.3 285.5,181.3 285.8,166.8 286.1,150.8 286.3,135.8 286.6,124.0 286.8,117.5 287.1,117.4 287.4,123.9 287.6,136.2 287.9,152.3 288.2,170.0 288.4,186.6 288.7,199.8 289.0,207.8 289.2,209.7 289.5,205.5 289.8,196.1 290.0,183.2 290.3,168.8 290.5,155.1 290.8,143.8 291.1,136.1 291.3,132.7 291.6,133.4 291.9,137.4 292.1,143.5 292.4,150.2 292.7,156.3 292.9,160.5 293.2,162.0 293.4,160.6 293.7,156.2 294.0,149.3 294.2,140.7 294.5,131.1 294.8,121.3 295.0,112.2 295.3,104.4 295.6,98.6 295.8,95.3 296.1,94.7 296.3,97.1 296.6,102.3 296.9,110.3 297.1,120.6 297.4,132.3 297.7,144.6 297.9,156.4 298.2,166.4 298.5,173.7 298.7,177.3 299.0,176.9 299.3,172.4 299.5,164.3 299.8,153.7 300.0,141.8 300.3,130.2 300.6,120.4 300.8,113.7 301.1,111.0 301.4,112.5 301.6,118.1 301.9,127.0 302.2,138.1 302.4,149.9 302.7,161.2 302.9,170.7 303.2,177.5 303.5,181.0 303.7,181.2 304.0,178.4 304.3,173.3 304.5,166.6 304.8,159.3 305.1,152.1 305.3,146.0 305.6,141.6 305.9,139.2 306.1,139.2 306.4,141.6 306.6,146.3 306.9,153.1 307.2,161.4 307.4,170.6 307.7,179.7 308.0,187.9 308.2,194.0 308.5,197.2 308.8,196.7 309.0,192.2 309.3,183.9 309.5,172.4 309.8,159.0 310.1,145.3 310.3,133.0 310.6,123.7 310.9,119.0 311.1,119.4 311.4,125.0 311.7,134.9 311.9,147.5 312.2,160.7 312.4,172.0 312.7,179.3 313.0,181.0 313.2,176.2 313.5,165.2 313.8,149.1 314.0,130.1 314.3,111.0 314.6,94.7 314.8,83.7 315.1,79.9 315.4,84.3 315.6,96.5 315.9,115.3 316.1,138.2 316.4,162.6 316.7,185.3 316.9,203.8 317.2,216.1 317.5,221.2 317.7,219.0 318.0,210.5 318.3,197.1 318.5,181.0 318.8,164.1 319.0,148.4 319.3,135.0 319.6,124.8 319.8,118.0 320.1,114.2 320.4,112.9 320.6,113.5 320.9,115.5 321.2,118.5 321.4,122.3 321.7,127.0 322.0,132.4 322.2,138.4 322.5,144.7 322.7,150.5 323.0,155.0 323.3,157.2 323.5,156.3 323.8,151.7 324.1,143.4 324.3,132.2 324.6,119.3 324.9,106.5 325.1,95.8 325.4,89.2 325.6,88.0 325.9,93.0 326.2,103.9 326.4,119.4 326.7,137.4 327.0,155.1 327.2,169.9 327.5,179.3 327.8,181.6 328.0,176.3 328.3,164.3 328.6,147.4 328.8,128.5 329.1,110.9 329.3,97.6 329.6,91.3 329.9,93.3 330.1,103.9 330.4,121.8 330.7,144.7 330.9,169.3 331.2,192.3 331.5,210.6 331.7,221.8 332.0,224.9 332.2,219.9 332.5,208.3 332.8,192.4 333.0,175.1 333.3,159.3 333.6,147.4 333.8,141.1 334.1,140.8 334.4,146.0 334.6,155.3 334.9,166.6 335.1,177.5 335.4,186.1 335.7,190.8 335.9,190.8 336.2,186.3 336.5,178.2 336.7,167.8 337.0,156.9 337.3,146.9 337.5,139.2 337.8,134.5 338.1,132.9 338.3,134.1 338.6,137.2 338.8,141.2 339.1,145.2 339.4,148.5 339.6,150.5 339.9,151.2 340.2,150.9 340.4,149.9 340.7,148.7 341.0,147.6 341.2,146.9 341.5,146.4 341.7,146.0 342.0,145.3 342.3,144.0 342.5,141.9 342.8,139.2 343.1,136.0 343.3,133.0 343.6,130.9 343.9,130.3 344.1,131.7 344.4,135.5 344.7,141.4 344.9,149.0 345.2,157.5 345.4,165.9 345.7,173.2 346.0,178.7 346.2,181.9 346.5,182.9 346.8,181.8 347.0,179.5 347.3,176.7 347.6,174.2 347.8,172.5 348.1,171.7 348.3,171.6 348.6,171.6 348.9,170.6 349.1,167.5 349.4,161.5 349.7,152.0 349.9,139.1 350.2,123.4 350.5,106.1 350.7,88.9 351.0,73.8 351.2,62.5 351.5,56.5 351.8,56.7 352.0,63.0 352.3,74.7 352.6,90.3 352.8,107.7 353.1,124.8 353.4,139.3 353.6,149.7 353.9,154.8 354.2,154.7 354.4,149.9 354.7,141.9 354.9,132.6 355.2,124.1 355.5,118.6 355.7,117.5 356.0,121.8 356.3,131.6 356.5,146.2 356.8,164.3 357.1,183.8 357.3,202.5 357.6,218.2 357.8,228.9 358.1,233.3 358.4,230.7 358.6,221.2 358.9,205.7 359.2,185.8 359.4,163.4 359.7,140.8 360.0,120.4 360.2,104.1 360.5,93.5 360.8,89.6 361.0,92.7 361.3,102.3 361.5,117.2 361.8,135.9 362.1,156.3 362.3,176.3 362.6,194.0 362.9,207.6 363.1,216.0 363.4,218.6 363.7,215.5 363.9,207.3 364.2,195.3 364.4,181.0 364.7,166.1 365.0,152.0 365.2,140.1 365.5,131.3 365.8,125.9 366.0,124.0 366.3,125.0 366.6,128.1 366.8,132.5 367.1,137.2 367.4,141.5 367.6,144.7 367.9,146.7 368.1,147.4 368.4,146.9 368.7,145.6 368.9,143.8 369.2,141.6 369.5,139.2 369.7,136.6 370.0,133.9 370.3,130.8 370.5,127.5 370.8,124.1 371.0,120.8 371.3,118.1 371.6,116.6 371.8,116.6 372.1,118.7 372.4,123.0 372.6,129.4 372.9,137.3 373.2,146.0 373.4,154.4 373.7,161.3 373.9,165.7 374.2,166.9 374.5,164.6 374.7,159.2 375.0,151.5 375.3,142.8 375.5,134.7 375.8,129.1 376.1,127.4 376.3,130.6 376.6,139.0 376.9,152.3 377.1,169.3 377.4,188.1 377.6,206.4 377.9,221.8 378.2,232.3 378.4,236.1 378.7,232.5 379.0,221.5 379.2,204.3 379.5,182.6 379.8,158.9 380.0,136.0 380.3,116.4 380.5,102.2 380.8,94.8 381.1,94.6 381.3,101.0 381.6,112.5 381.9,126.9 382.1,141.6 382.4,154.1 382.7,162.1 382.9,164.1 383.2,159.3 383.5,148.2 383.7,132.0 384.0,112.8 384.2,93.3 384.5,76.1 384.8,63.9 385.0,58.7 385.3,61.6 385.6,72.8 385.8,91.4 386.1,115.5 386.4,142.8 386.6,170.3 386.9,195.1 387.1,214.6 387.4,226.9 387.7,231.0 387.9,226.9 388.2,215.5 388.5,198.5 388.7,178.2 389.0,157.1 389.3,137.8 389.5,122.4 389.8,112.3 390.1,108.5 390.3,110.7 390.6,118.3 390.8,130.0 391.1,144.2 391.4,159.0 391.6,172.8 391.9,184.3 392.2,192.5 392.4,197.0 392.7,197.8 393.0,195.1 393.2,189.8 393.5,182.5 393.7,174.3 394.0,165.9 394.3,158.0 394.5,151.2 394.8,145.9 395.1,142.4 395.3,140.7 395.6,140.8 395.9,142.4 396.1,145.1 396.4,148.3 396.6,151.5 396.9,154.0 397.2,155.2 397.4,154.5 397.7,151.6 398.0,146.5 398.2,139.6 398.5,131.6 398.8,123.4 399.0,116.3 399.3,111.2 399.6,109.1 399.8,110.6 400.1,115.6 400.3,123.7 400.6,133.7 400.9,144.1 401.1,153.3 401.4,159.6 401.7,161.7 401.9,159.0 402.2,151.7 402.5,140.6 402.7,127.3 403.0,113.9 403.2,102.8 403.5,96.0 403.8,95.0 404.0,100.7 404.3,112.9 404.6,130.4 404.8,151.4 405.1,173.3 405.4,193.5 405.6,209.6 405.9,219.9 406.2,223.3 406.4,219.8 406.7,210.1 406.9,195.9 407.2,179.0 407.5,161.6 407.7,145.3 408.0,131.5 408.3,120.9 408.5,113.5 408.8,108.8 409.1,106.0 409.3,104.3 409.6,102.8 409.8,101.4 410.1,100.0 410.4,99.1 410.6,99.4 410.9,101.7 411.2,106.5 411.4,114.2 411.7,124.3 412.0,136.1 412.2,148.4 412.5,159.8 412.7,168.8 413.0,174.3 413.3,175.9 413.5,173.5 413.8,168.0 414.1,160.6 414.3,153.0 414.6,146.9 414.9,143.7 415.1,144.4 415.4,149.1 415.7,157.4 415.9,168.1 416.2,179.8 416.4,190.6 416.7,199.3 417.0,204.5 417.2,205.9 417.5,203.6 417.8,198.3 418.0,191.2 418.3,183.4 418.6,176.3 418.8,170.8 419.1,167.2 419.3,165.5 419.6,165.4 419.9,166.2 420.1,167.0 420.4,167.2 420.7,166.4 420.9,164.5 421.2,161.9 421.5,158.9 421.7,156.1 422.0,153.7 422.3,152.0 422.5,150.7 422.8,149.2 423.0,147.0 423.3,143.3 423.6,137.7 423.8,130.2 424.1,121.3 424.4,112.2 424.6,104.2 424.9,99.1 425.2,98.3 425.4,102.8 425.7,112.9 425.9,127.8 426.2,145.9 426.5,164.8 426.7,181.8 427.0,194.2 427.3,199.8 427.5,197.5 427.8,187.1 428.1,170.1 428.3,148.7 428.6,126.4 428.9,106.5 429.1,92.2 429.4,86.0 429.6,88.8 429.9,100.4 430.2,118.8 430.4,141.3 430.7,164.2 431.0,183.9 431.2,197.4 431.5,202.7 431.8,199.1 432.0,187.4 432.3,169.6 432.5,148.5 432.8,127.3 433.1,109.0 433.3,95.8 433.6,89.0 433.9,88.7 434.1,93.6 434.4,102.2 434.7,112.2 434.9,121.5 435.2,128.5 435.4,132.5 435.7,133.4 436.0,132.1 436.2,129.8 436.5,128.1 436.8,128.2 437.0,130.8 437.3,135.9 437.6,142.8 437.8,150.2 438.1,156.5 438.4,160.2 438.6,160.3 438.9,156.4 439.1,149.1 439.4,139.6 439.7,129.7 439.9,121.5 440.2,116.7 440.5,116.4 440.7,121.0 441.0,130.0 441.3,141.9 441.5,154.6 441.8,166.1 442.0,174.5 442.3,178.5 442.6,178.0 442.8,173.7 443.1,167.1 443.4,160.3 443.6,155.7 443.9,155.0 444.2,159.2 444.4,168.1 444.7,180.6 445.0,194.5 445.2,207.0 445.5,215.4 445.7,217.4 446.0,211.7 446.3,198.5 446.5,179.2 446.8,156.6 447.1,134.0 447.3,115.3 447.6,103.7 447.9,101.2 448.1,108.7 448.4,125.2 448.6,148.2 448.9,174.2 449.2,199.0 449.4,218.6 449.7,229.9 450.0,231.2 450.2,222.2 450.5,204.5 450.8,181.0 451.0,155.5 451.3,131.8 451.5,113.5 451.8,102.8 452.1,100.9 452.3,107.0 452.6,119.2 452.9,134.4 453.1,149.5 453.4,161.1 453.7,167.0 453.9,166.0 454.2,158.4 454.5,145.6 454.7,130.2 455.0,115.0 455.2,102.9 455.5,96.0 455.8,95.6 456.0,101.5 456.3,112.6 456.6,126.6 456.8,140.8 457.1,152.6 457.4,159.9 457.6,161.3 457.9,156.9 458.1,147.8 458.4,136.0 458.7,124.2 458.9,115.2 459.2,111.3 459.5,114.1 459.7,124.0 460.0,140.2 460.3,160.8 460.5,183.1 460.8,204.0 461.1,220.7 461.3,230.6 461.6,232.5 461.8,226.0 462.1,212.1 462.4,192.8 462.6,170.5 462.9,148.4 463.2,129.2 463.4,115.1 463.7,107.4 464.0,106.7 464.2,112.1 464.5,122.4 464.7,135.2 465.0,148.5 465.3,159.9 465.5,167.9 465.8,171.2 466.1,169.8 466.3,164.2 466.6,155.6 466.9,145.6 467.1,136.1 467.4,128.7 467.7,124.5 467.9,124.1 468.2,127.4 468.4,133.4 468.7,140.8 469.0,148.0 469.2,153.1 469.5,154.7 469.8,151.8 470.0,144.1 470.3,132.1 470.6,117.0 470.8,100.5 471.1,84.7 471.3,71.7 471.6,63.2 471.9,60.6 472.1,64.4 472.4,74.3 472.7,89.1 472.9,107.1 473.2,126.2 473.5,144.1 473.7,158.9 474.0,169.1 474.2,174.0 474.5,173.7 474.8,168.9 475.0,161.1 475.3,152.0 475.6,143.4 475.8,137.1 476.1,134.0 476.4,134.9 476.6,139.4 476.9,147.1 477.2,156.6 477.4,166.7 477.7,176.0 477.9,183.5 478.2,188.6 478.5,190.9 478.7,190.8 479.0,189.0 479.3,186.1 479.5,183.1 479.8,180.5 480.1,178.8 480.3,177.9 480.6,177.6 480.8,177.4 481.1,176.5 481.4,174.6 481.6,171.4 481.9,166.6 482.2,160.8 482.4,154.3 482.7,148.0 483.0,142.7 483.2,138.9 483.5,137.1 483.8,137.6 484.0,140.1 484.3,144.2 484.5,149.3 484.8,154.8 485.1,160.2 485.3,164.9 485.6,168.8 485.9,172.0 486.1,174.4 486.4,176.3 486.7,177.7 486.9,178.8 487.2,179.4 487.4,179.0 487.7,177.5 488.0,174.3 488.2,169.2 488.5,162.4 488.8,154.1 489.0,145.1 489.3,136.3 489.6,128.9 489.8,123.9 490.1,122.1 490.4,124.1 490.6,129.8 490.9,138.5 491.1,149.3 491.4,160.7 491.7,171.1 491.9,179.1 492.2,183.5 492.5,183.8 492.7,179.8 493.0,172.2 493.3,162.1 493.5,150.7 493.8,139.7 494.0,130.5 494.3,124.0 494.6,120.9 494.8,121.3 495.1,124.8 495.4,130.8 495.6,138.0 495.9,145.6 496.2,152.4 496.4,157.6 496.7,160.5 496.9,160.9 497.2,158.5 497.5,153.3 497.7,145.6 498.0,135.7 498.3,123.8 498.5,110.7 498.8,96.9 499.1,83.4 499.3,71.2 499.6,61.5 499.9,55.5 500.1,54.2 500.4,58.4 500.6,68.4 500.9,83.7 501.2,103.6 501.4,126.2 501.7,149.6 502.0,171.5 502.2,189.5 502.5,201.9 502.8,207.3 503.0,205.5 503.3,197.0 503.5,183.3 503.8,166.3 504.1,148.5 504.3,132.4 504.6,120.0 504.9,112.6 505.1,110.7 505.4,114.0 505.7,121.1 505.9,130.3 506.2,139.5 506.5,146.9 506.7,151.0 507.0,150.9 507.2,146.6 507.5,138.9 507.8,129.2 508.0,119.2 508.3,110.9 508.6,105.8 508.8,105.2 509.1,109.6 509.4,119.1 509.6,132.9 509.9,149.9 510.1,168.8 510.4,187.9 510.7,206.1 510.9,222.1 511.2,235.2 511.5,244.8 511.7,250.8 512.0,253.1 512.3,251.9 512.5,247.4 512.8,240.0 513.0,230.2 513.3,218.5 513.6,205.5 513.8,192.0 514.1,178.8 514.4,166.7 514.6,156.4 514.9,148.4 515.2,142.9 515.4,139.5 515.7,137.8 516.0,136.9 516.2,135.9 516.5,133.8 516.7,129.9 517.0,123.9 517.3,116.2 517.5,107.4 517.8,98.7 518.1,91.5 518.3,87.1 518.6,86.6 518.9,90.4 519.1,98.5 519.4,110.0 519.6,123.6 519.9,137.5 520.2,149.9 520.4,159.2 520.7,164.4 521.0,165.4 521.2,162.5 521.5,156.9 521.8,150.2 522.0,144.2 522.3,140.5 522.6,140.0 522.8,143.1 523.1,149.2 523.3,157.2 523.6,165.5 523.9,172.4 524.1,176.5 524.4,176.8 524.7,173.3 524.9,166.8 525.2,158.5 525.5,150.5 525.7,144.4 526.0,141.9 526.2,143.6 526.5,149.5 526.8,158.3 527.0,168.3 527.3,177.0 527.6,182.1 527.8,181.8 528.1,175.1 528.4,162.2 528.6,144.6 528.9,124.6 529.2,105.2 529.4,89.7 529.7,80.5 529.9,79.5 530.2,86.9 530.5,101.7 530.7,121.6 531.0,143.1 531.3,162.8 531.5,177.1 531.8,183.5 532.1,180.9 532.3,169.6 532.6,151.5 532.8,129.7 533.1,107.9 533.4,90.0 533.6,79.2 533.9,77.7 534.2,86.2 534.4,103.8 534.7,128.2 535.0,156.3 535.2,184.1 535.5,208.2 535.7,225.7 536.0,234.7 536.3,234.7 536.5,226.6 536.8,212.2 537.1,194.1 537.3,174.9 537.6,157.3 537.9,143.3 538.1,133.9 538.4,129.6 538.7,129.9 538.9,133.7 539.2,139.8 539.4,146.9 539.7,154.0 540.0,160.3 540.2,165.4 540.5,169.3" fill="none" stroke="#ff0000" stroke-width="2" stroke-linejoin="miter" shape-rendering="crispEdges"/></svg>
<div style="position:absolute;left:871px;top:214px;white-space:nowrap;font-family:'Liberation Serif', serif;font-size:12px;line-height:14px;color:#ff0000">Time1</div>
<div style="position:absolute;left:282px;top:207px;white-space:nowrap;font-family:'Liberation Serif', serif;font-size:12px;line-height:14px;color:#111">44.459</div>
<div style="position:absolute;left:282px;top:255.45000000000005px;white-space:nowrap;font-family:'Liberation Serif', serif;font-size:12px;line-height:14px;color:#111">30.000</div>
<div style="position:absolute;left:282px;top:288.5px;white-space:nowrap;font-family:'Liberation Serif', serif;font-size:12px;line-height:14px;color:#111">20.000</div>
<div style="position:absolute;left:282px;top:321.55px;white-space:nowrap;font-family:'Liberation Serif', serif;font-size:12px;line-height:14px;color:#111">10.000</div>
<div style="position:absolute;left:282px;top:354.6px;white-space:nowrap;font-family:'Liberation Serif', serif;font-size:12px;line-height:14px;color:#111">0</div>
<div style="position:absolute;left:282px;top:387.65000000000003px;white-space:nowrap;font-family:'Liberation Serif', serif;font-size:12px;line-height:14px;color:#111">-10.000</div>
<div style="position:absolute;left:282px;top:420.70000000000005px;white-space:nowrap;font-family:'Liberation Serif', serif;font-size:12px;line-height:14px;color:#111">-20.000</div>
<div style="position:absolute;left:282px;top:453.75px;white-space:nowrap;font-family:'Liberation Serif', serif;font-size:12px;line-height:14px;color:#111">-30.000</div>
<div style="position:absolute;left:282px;top:494px;white-space:nowrap;font-family:'Liberation Serif', serif;font-size:12px;line-height:14px;color:#111">-42.480</div>
<div style="position:absolute;left:327px;top:506px;white-space:nowrap;font-family:'Liberation Serif', serif;font-size:12px;line-height:14px;color:#111">0.0391</div>
<div style="position:absolute;left:395px;top:506px;white-space:nowrap;font-family:'Liberation Serif', serif;font-size:12px;line-height:14px;color:#111">10.000</div>
<div style="position:absolute;left:462px;top:506px;white-space:nowrap;font-family:'Liberation Serif', serif;font-size:12px;line-height:14px;color:#111">20.000</div>
<div style="position:absolute;left:530px;top:506px;white-space:nowrap;font-family:'Liberation Serif', serif;font-size:12px;line-height:14px;color:#111">30.000</div>
<div style="position:absolute;left:597px;top:506px;white-space:nowrap;font-family:'Liberation Serif', serif;font-size:12px;line-height:14px;color:#111">40.000</div>
<div style="position:absolute;left:665px;top:506px;white-space:nowrap;font-family:'Liberation Serif', serif;font-size:12px;line-height:14px;color:#111">50.000</div>
<div style="position:absolute;left:732px;top:506px;white-space:nowrap;font-family:'Liberation Serif', serif;font-size:12px;line-height:14px;color:#111">60.000</div>
<div style="position:absolute;left:800px;top:506px;white-space:nowrap;font-family:'Liberation Serif', serif;font-size:12px;line-height:14px;color:#111">70.000</div>
<div style="position:absolute;left:868px;top:506px;white-space:nowrap;font-family:'Liberation Serif', serif;font-size:12px;line-height:14px;color:#111">80.000</div>
<div style="position:absolute;left:596px;top:519px;white-space:nowrap;font-family:'Liberation Sans', sans-serif;font-size:12px;line-height:16px;color:#111">窗体<span style="font-family:Liberation Serif,serif">1</span> 时间<span style="font-family:Liberation Serif,serif;font-size:10px">(ms)</span></div>
<div style="position:absolute;left:866px;top:523px;width:19px;height:16px;background:linear-gradient(#fcfcfc,#dadde2);border:1px solid #505864;border-radius:3px;box-sizing:border-box"></div>
<div style="position:absolute;left:866px;top:523px;width:19px;text-align:center;white-space:nowrap;font-family:'Liberation Serif', serif;font-size:11px;line-height:15px;color:#111;font-weight:bold">A</div>
<div style="position:absolute;left:885px;top:523px;width:19px;height:16px;background:linear-gradient(#fcfcfc,#dadde2);border:1px solid #505864;border-radius:3px;box-sizing:border-box"></div>
<div style="position:absolute;left:885px;top:523px;width:19px;text-align:center;white-space:nowrap;font-family:'Liberation Serif', serif;font-size:11px;line-height:15px;color:#111;font-weight:bold">+</div>
<div style="position:absolute;left:904px;top:523px;width:19px;height:16px;background:linear-gradient(#fcfcfc,#dadde2);border:1px solid #505864;border-radius:3px;box-sizing:border-box"></div>
<div style="position:absolute;left:904px;top:523px;width:19px;text-align:center;white-space:nowrap;font-family:'Liberation Serif', serif;font-size:11px;line-height:15px;color:#111;font-weight:bold">-</div>
<div style="position:absolute;left:926px;top:185px;width:650px;height:356px;background:#ebebeb;border-top:2px solid #8393aa;border-left:1px solid #fafafa;border-right:1px solid #fafafa;box-sizing:border-box"></div>
<div style="position:absolute;left:936px;top:190px;white-space:nowrap;font-family:'Liberation Sans', sans-serif;font-size:12px;line-height:16px;color:#111">功率谱<span style="font-family:Liberation Serif,serif;font-size:11px">.rms(Pa)</span></div>
<svg style="position:absolute;left:976px;top:217px;overflow:visible" width="541" height="287" viewBox="0 0 541 287"><rect x="0" y="0" width="541" height="287" fill="#fff"/><path d="M0 286.5H541 M0 279.5H541 M0 274.5H541 M0 269.5H541 M0 264.5H541 M0 234.5H541 M0 216.5H541 M0 203.5H541 M0 194.5H541 M0 186.5H541 M0 179.5H541 M0 173.5H541 M0 168.5H541 M0 163.5H541 M0 133.5H541 M0 115.5H541 M0 103.5H541 M0 93.5H541 M0 85.5H541 M0 78.5H541 M0 72.5H541 M0 67.5H541 M0 62.5H541 M0 32.5H541 M0 14.5H541 M39.5 0V287 M71.5 0V287 M95.5 0V287 M113.5 0V287 M127.5 0V287 M140.5 0V287 M151.5 0V287 M160.5 0V287 M169.5 0V287 M225.5 0V287 M258.5 0V287 M281.5 0V287 M299.5 0V287 M314.5 0V287 M326.5 0V287 M337.5 0V287 M346.5 0V287 M355.5 0V287 M411.5 0V287 M444.5 0V287 M467.5 0V287 M485.5 0V287 M500.5 0V287 M512.5 0V287 M523.5 0V287 M533.5 0V287 M0.5 0.5H540.5V286.5H0.5Z" stroke="#b0b0b0" stroke-width="1" stroke-dasharray="3 3" fill="none"/><polyline points="0.0,147.5 104.0,147.8 130.3,145.8 158.5,143.6 188.8,134.5 199.0,127.0 208.0,118.0 214.0,103.8 219.6,76.5 225.2,65.4 230.3,62.4 234.3,54.3 239.4,57.7 249.5,57.7 259.6,50.3 267.6,58.4 275.7,52.3 277.7,44.2 282.0,53.0 284.0,54.7 286.7,56.4 289.3,56.7 292.8,66.2 295.5,65.7 296.4,50.7 298.6,48.9 301.7,52.5 305.2,52.0 308.3,60.9 309.6,48.9 312.3,48.9 314.1,53.8 318.5,63.1 319.8,52.5 321.1,60.4 322.9,60.4 324.7,50.7 327.3,47.1 330.4,56.0 332.6,50.7 337.0,51.1 338.8,53.8 341.5,49.8 343.2,58.6 345.9,55.5 347.7,59.5 349.4,55.1 351.2,60.4 354.7,54.2 357.4,59.5 360.0,59.1 362.7,44.5 364.5,44.5 365.3,64.0 367.1,50.7 369.8,48.5 371.5,56.0 373.3,53.3 376.4,62.2 377.7,49.8 381.3,53.3 384.8,48.0 386.6,56.0 389.2,65.3 389.7,48.9 391.5,54.0 393.6,50.7 396.3,65.7 397.6,53.3 399.8,63.1 401.6,50.7 404.7,62.2 406.5,53.0 408.7,48.9 410.4,57.8 411.3,57.8 412.0,85.6 412.7,120.0 413.5,133.0 414.5,138.3 416.0,145.1 417.5,151.0 419.0,156.0 420.5,160.2 422.0,163.9 423.5,167.0 425.0,169.8 426.5,172.3 428.0,174.5 429.5,176.6 431.0,178.5 432.5,180.3 434.0,182.1 435.5,183.9 437.0,185.5 438.5,187.2 440.0,188.8 441.5,190.3 443.0,191.8 444.5,193.2 446.0,194.6 447.5,195.9 449.0,197.3 450.5,198.5 452.0,199.8 453.5,200.9 455.0,202.1 456.5,203.2 458.0,204.3 459.5,205.3 461.0,206.3 462.5,207.3 464.0,208.3 465.5,209.2 467.0,210.2 468.5,211.1 470.0,212.0 471.5,212.9 473.0,213.9 474.5,214.8 476.0,215.8 477.5,216.7 479.0,217.6 480.5,218.5 482.0,219.5 483.5,220.4 485.0,221.3 486.5,222.2 488.0,223.0 489.5,223.9 491.0,224.8 492.5,225.6 494.0,226.4 495.5,227.2 497.0,228.0 498.5,228.8 500.0,229.6 501.5,230.3 503.0,231.0 504.5,231.7 506.0,232.4 507.5,233.1 509.0,233.8 510.5,234.5 512.0,235.2 513.5,235.8 515.0,236.5 516.5,237.1 518.0,237.8 519.5,238.4 521.0,239.0 522.5,239.6 524.0,240.2 525.5,240.9 527.0,241.5 528.5,242.0 530.0,242.6 531.5,243.2 533.0,243.8 534.5,244.3 536.0,244.9 537.5,245.4 539.0,246.0 540.5,246.5" fill="none" stroke="#ff0000" stroke-width="2"/></svg>
<div style="position:absolute;left:1520px;top:214px;white-space:nowrap;font-family:'Liberation Serif', serif;font-size:12px;line-height:14px;color:#ff0000">APS1</div>
<div style="position:absolute;left:932px;top:207px;white-space:nowrap;font-family:'Liberation Serif', serif;font-size:12px;line-height:14px;color:#111">4.0141</div>
<div style="position:absolute;left:932px;top:269px;white-space:nowrap;font-family:'Liberation Serif', serif;font-size:12px;line-height:14px;color:#111">1.0000</div>
<div style="position:absolute;left:932px;top:370px;white-space:nowrap;font-family:'Liberation Serif', serif;font-size:12px;line-height:14px;color:#111">0.100</div>
<div style="position:absolute;left:932px;top:471px;white-space:nowrap;font-family:'Liberation Serif', serif;font-size:12px;line-height:14px;color:#111">0.010</div>
<div style="position:absolute;left:932px;top:494px;white-space:nowrap;font-family:'Liberation Serif', serif;font-size:12px;line-height:14px;color:#111">0.0057</div>
<div style="position:absolute;left:977px;top:506px;white-space:nowrap;font-family:'Liberation Serif', serif;font-size:12px;line-height:14px;color:#111">12.500</div>
<div style="position:absolute;left:1144px;top:506px;white-space:nowrap;font-family:'Liberation Serif', serif;font-size:12px;line-height:14px;color:#111">100.00</div>
<div style="position:absolute;left:1330px;top:506px;white-space:nowrap;font-family:'Liberation Serif', serif;font-size:12px;line-height:14px;color:#111">1000.0</div>
<div style="position:absolute;left:1517px;top:506px;white-space:nowrap;font-family:'Liberation Serif', serif;font-size:12px;line-height:14px;color:#111">10000.</div>
<div style="position:absolute;left:1247px;top:519px;white-space:nowrap;font-family:'Liberation Sans', sans-serif;font-size:12px;line-height:16px;color:#111">窗体<span style="font-family:Liberation Serif,serif">3</span> 频率<span style="font-family:Liberation Serif,serif;font-size:11px">(Hz)</span></div>
<div style="position:absolute;left:1515px;top:523px;width:19px;height:16px;background:linear-gradient(#fcfcfc,#dadde2);border:1px solid #505864;border-radius:3px;box-sizing:border-box"></div>
<div style="position:absolute;left:1515px;top:523px;width:19px;text-align:center;white-space:nowrap;font-family:'Liberation Serif', serif;font-size:11px;line-height:15px;color:#111;font-weight:bold">A</div>
<div style="position:absolute;left:1534px;top:523px;width:19px;height:16px;background:linear-gradient(#fcfcfc,#dadde2);border:1px solid #505864;border-radius:3px;box-sizing:border-box"></div>
<div style="position:absolute;left:1534px;top:523px;width:19px;text-align:center;white-space:nowrap;font-family:'Liberation Serif', serif;font-size:11px;line-height:15px;color:#111;font-weight:bold">+</div>
<div style="position:absolute;left:1553px;top:523px;width:19px;height:16px;background:linear-gradient(#fcfcfc,#dadde2);border:1px solid #505864;border-radius:3px;box-sizing:border-box"></div>
<div style="position:absolute;left:1553px;top:523px;width:19px;text-align:center;white-space:nowrap;font-family:'Liberation Serif', serif;font-size:11px;line-height:15px;color:#111;font-weight:bold">-</div>
<div style="position:absolute;left:276px;top:542px;width:647px;height:358px;background:#ebebeb;border-top:2px solid #8393aa;border-left:1px solid #fafafa;border-right:1px solid #fafafa;box-sizing:border-box"></div>
<div style="position:absolute;left:571px;top:547px;white-space:nowrap;font-family:'Liberation Serif', serif;font-size:13px;line-height:16px;color:#111">SPL1 Total 115.36(dB)</div>
<svg style="position:absolute;left:0;top:0" width="1584" height="908"><path d="M345 861.5H921 M345 833.5H921 M345 804.5H921 M345 776.5H921 M345 747.5H921 M345 719.5H921 M345 690.5H921 M345 662.5H921 M345 633.5H921 M345 605.5H921 M345 576.5H921" stroke="#bccadb" stroke-width="1" fill="none"/><rect x="343.3" y="789.1" width="16.2" height="71.9" fill="#ff0000"/><rect x="363.2" y="805.3" width="16.2" height="55.7" fill="#ff0000"/><rect x="383.0" y="789.1" width="16.2" height="71.9" fill="#ff0000"/><rect x="402.9" y="787.9" width="16.2" height="73.1" fill="#ff0000"/><rect x="422.7" y="804.1" width="16.2" height="56.9" fill="#ff0000"/><rect x="442.6" y="777.0" width="16.2" height="84.0" fill="#ff0000"/><rect x="462.5" y="783.8" width="16.2" height="77.2" fill="#ff0000"/><rect x="482.3" y="772.1" width="16.2" height="88.9" fill="#ff0000"/><rect x="502.2" y="765.2" width="16.2" height="95.8" fill="#ff0000"/><rect x="522.0" y="739.3" width="16.2" height="121.7" fill="#ff0000"/><rect x="541.9" y="681.8" width="16.2" height="179.2" fill="#ff0000"/><rect x="561.8" y="671.6" width="16.2" height="189.4" fill="#ff0000"/><rect x="581.6" y="662.7" width="16.2" height="198.3" fill="#ff0000"/><rect x="601.5" y="658.7" width="16.2" height="202.3" fill="#ff0000"/><rect x="621.3" y="655.9" width="16.2" height="205.1" fill="#ff0000"/><rect x="641.2" y="647.8" width="16.2" height="213.2" fill="#ff0000"/><rect x="661.1" y="640.9" width="16.2" height="220.1" fill="#ff0000"/><rect x="680.9" y="636.8" width="16.2" height="224.2" fill="#ff0000"/><rect x="700.8" y="632.0" width="16.2" height="229.0" fill="#ff0000"/><rect x="720.6" y="627.5" width="16.2" height="233.5" fill="#ff0000"/><rect x="740.5" y="639.7" width="16.2" height="221.3" fill="#ff0000"/><rect x="760.4" y="746.2" width="16.2" height="114.8" fill="#ff0000"/><rect x="780.2" y="764.0" width="16.2" height="97.0" fill="#ff0000"/><rect x="800.1" y="774.2" width="16.2" height="86.8" fill="#ff0000"/><rect x="819.9" y="780.3" width="16.2" height="80.7" fill="#ff0000"/><rect x="839.8" y="785.9" width="16.2" height="75.1" fill="#ff0000"/><rect x="859.7" y="789.1" width="16.2" height="71.9" fill="#ff0000"/><rect x="892.5" y="589.5" width="22" height="272" fill="#ff0000" stroke="#f6f080" stroke-width="2"/><path d="M344 576V861H880" stroke="#000" stroke-width="2.5" fill="none"/><path d="M888 861H921" stroke="#000" stroke-width="2.5" fill="none"/></svg>
<div style="position:absolute;left:260px;top:854px;width:76px;text-align:right;white-space:nowrap;font-family:'Liberation Serif', serif;font-size:13px;line-height:14px;color:#111">53</div>
<div style="position:absolute;left:260px;top:826px;width:76px;text-align:right;white-space:nowrap;font-family:'Liberation Serif', serif;font-size:13px;line-height:14px;color:#111">58.3</div>
<div style="position:absolute;left:260px;top:797px;width:76px;text-align:right;white-space:nowrap;font-family:'Liberation Serif', serif;font-size:13px;line-height:14px;color:#111">63.6</div>
<div style="position:absolute;left:260px;top:769px;width:76px;text-align:right;white-space:nowrap;font-family:'Liberation Serif', serif;font-size:13px;line-height:14px;color:#111">68.9</div>
<div style="position:absolute;left:260px;top:740px;width:76px;text-align:right;white-space:nowrap;font-family:'Liberation Serif', serif;font-size:13px;line-height:14px;color:#111">74.2</div>
<div style="position:absolute;left:260px;top:712px;width:76px;text-align:right;white-space:nowrap;font-family:'Liberation Serif', serif;font-size:13px;line-height:14px;color:#111">79.5</div>
<div style="position:absolute;left:260px;top:683px;width:76px;text-align:right;white-space:nowrap;font-family:'Liberation Serif', serif;font-size:13px;line-height:14px;color:#111">84.8</div>
<div style="position:absolute;left:260px;top:655px;width:76px;text-align:right;white-space:nowrap;font-family:'Liberation Serif', serif;font-size:13px;line-height:14px;color:#111">90.1</div>
<div style="position:absolute;left:260px;top:626px;width:76px;text-align:right;white-space:nowrap;font-family:'Liberation Serif', serif;font-size:13px;line-height:14px;color:#111">95.4</div>
<div style="position:absolute;left:260px;top:598px;width:76px;text-align:right;white-space:nowrap;font-family:'Liberation Serif', serif;font-size:13px;line-height:14px;color:#111">100.7</div>
<div style="position:absolute;left:260px;top:569px;width:76px;text-align:right;white-space:nowrap;font-family:'Liberation Serif', serif;font-size:13px;line-height:14px;color:#111">106</div>
<div style="position:absolute;left:280px;top:614px;white-space:nowrap;font-family:'Liberation Serif', serif;font-size:14.5px;color:#111;text-align:center;width:14px"><div style="font-family:'Liberation Sans',sans-serif;font-size:14px;line-height:15.5px">声<br>压<br>级</div><div style="line-height:16.6px">.<br>r<br>m<br>s<br>.<br>d<br>B</div></div>
<div style="position:absolute;left:321px;top:864px;width:60px;text-align:center;white-space:nowrap;font-family:'Liberation Serif', serif;font-size:12.5px;line-height:14px;color:#111">20</div>
<div style="position:absolute;left:361px;top:864px;width:60px;text-align:center;white-space:nowrap;font-family:'Liberation Serif', serif;font-size:12.5px;line-height:14px;color:#111">32</div>
<div style="position:absolute;left:401px;top:864px;width:60px;text-align:center;white-space:nowrap;font-family:'Liberation Serif', serif;font-size:12.5px;line-height:14px;color:#111">50</div>
<div style="position:absolute;left:440px;top:864px;width:60px;text-align:center;white-space:nowrap;font-family:'Liberation Serif', serif;font-size:12.5px;line-height:14px;color:#111">80</div>
<div style="position:absolute;left:480px;top:864px;width:60px;text-align:center;white-space:nowrap;font-family:'Liberation Serif', serif;font-size:12.5px;line-height:14px;color:#111">125</div>
<div style="position:absolute;left:520px;top:864px;width:60px;text-align:center;white-space:nowrap;font-family:'Liberation Serif', serif;font-size:12.5px;line-height:14px;color:#111">200</div>
<div style="position:absolute;left:560px;top:864px;width:60px;text-align:center;white-space:nowrap;font-family:'Liberation Serif', serif;font-size:12.5px;line-height:14px;color:#111">315</div>
<div style="position:absolute;left:599px;top:864px;width:60px;text-align:center;white-space:nowrap;font-family:'Liberation Serif', serif;font-size:12.5px;line-height:14px;color:#111">500</div>
<div style="position:absolute;left:639px;top:864px;width:60px;text-align:center;white-space:nowrap;font-family:'Liberation Serif', serif;font-size:12.5px;line-height:14px;color:#111">800</div>
<div style="position:absolute;left:659px;top:864px;width:60px;text-align:center;white-space:nowrap;font-family:'Liberation Serif', serif;font-size:12.5px;line-height:14px;color:#111">1.0K</div>
<div style="position:absolute;left:679px;top:864px;width:60px;text-align:center;white-space:nowrap;font-family:'Liberation Serif', serif;font-size:12.5px;line-height:14px;color:#111">1.3K</div>
<div style="position:absolute;left:718px;top:864px;width:60px;text-align:center;white-space:nowrap;font-family:'Liberation Serif', serif;font-size:12.5px;line-height:14px;color:#111">2.0K</div>
<div style="position:absolute;left:758px;top:864px;width:60px;text-align:center;white-space:nowrap;font-family:'Liberation Serif', serif;font-size:12.5px;line-height:14px;color:#111">3.2K</div>
<div style="position:absolute;left:798px;top:864px;width:60px;text-align:center;white-space:nowrap;font-family:'Liberation Serif', serif;font-size:12.5px;line-height:14px;color:#111">5.0K</div>
<div style="position:absolute;left:838px;top:864px;width:60px;text-align:center;white-space:nowrap;font-family:'Liberation Serif', serif;font-size:12.5px;line-height:14px;color:#111">8.0K</div>
<div style="position:absolute;left:874px;top:864px;width:60px;text-align:center;white-space:nowrap;font-family:'Liberation Serif', serif;font-size:12.5px;line-height:14px;color:#111">Total</div>
<div style="position:absolute;left:589px;top:879px;white-space:nowrap;font-family:'Liberation Sans', sans-serif;font-size:12px;line-height:16px;color:#111">窗体<span style="font-family:Liberation Serif,serif">2</span> 频率<span style="font-family:Liberation Serif,serif">(Hz)</span></div>
<div style="position:absolute;left:881px;top:880px;width:20px;height:16px;background:linear-gradient(#fcfcfc,#dadde2);border:1px solid #505864;border-radius:3px;box-sizing:border-box"></div>
<div style="position:absolute;left:881px;top:880px;width:20px;text-align:center;white-space:nowrap;font-family:'Liberation Serif', serif;font-size:11px;line-height:15px;color:#111;font-weight:bold">|</div>
<div style="position:absolute;left:901px;top:880px;width:20px;height:16px;background:linear-gradient(#fcfcfc,#dadde2);border:1px solid #505864;border-radius:3px;box-sizing:border-box"></div>
<div style="position:absolute;left:901px;top:880px;width:20px;text-align:center;white-space:nowrap;font-family:'Liberation Serif', serif;font-size:11px;line-height:15px;color:#111;font-weight:bold">+</div>
<div style="position:absolute;left:926px;top:542px;width:650px;height:358px;background:#ebebeb;border-top:2px solid #8393aa;border-left:1px solid #fafafa;border-right:1px solid #fafafa;box-sizing:border-box"></div>
<div style="position:absolute;left:936px;top:547px;white-space:nowrap;font-family:'Liberation Sans', sans-serif;font-size:12px;line-height:16px;color:#111">统计曲线<span style="font-family:Liberation Serif,serif;font-size:11px">.SPLrms(Pa)</span></div>
<svg style="position:absolute;left:976px;top:575px;overflow:visible" width="540" height="287" viewBox="0 0 540 287"><rect x="0" y="0" width="540" height="287" fill="#fff"/><path d="M0 268.5H540 M0 225.5H540 M0 182.5H540 M0 140.5H540 M0 98.5H540 M0 55.5H540 M0 12.5H540 M77.5 0V287 M155.5 0V287 M234.5 0V287 M313.5 0V287 M392.5 0V287 M471.5 0V287 M0.5 0.5H539.5V286.5H0.5Z" stroke="#b0b0b0" stroke-width="1" stroke-dasharray="3 3" fill="none"/><polyline points="0.0,101.5 21.0,101.5 21.0,90.0 21.0,89.9 23.0,90.1 25.0,91.0 27.0,89.9 29.0,90.0 31.0,90.2 33.0,89.2 35.0,90.0 37.0,90.3 39.0,90.7 41.0,89.0 43.0,89.5 45.0,89.0 47.0,90.7 49.0,90.5 51.0,88.9 53.0,91.2 55.0,91.1 57.0,90.4 59.0,90.3 61.0,89.2 63.0,88.8 65.0,90.1 67.0,88.9 69.0,89.3 71.0,89.4 73.0,88.9 75.0,89.9 77.0,89.9 79.0,90.8 81.0,90.0 83.0,90.3 85.0,90.0 87.0,90.4 89.0,89.9 91.0,89.5 93.0,91.2 95.0,91.2 97.0,90.8 99.0,90.5 101.0,89.6 103.0,89.4 105.0,89.5 107.3,83.3 107.0,82.4 109.0,84.2 111.0,83.2 113.0,84.4 115.0,83.2 117.0,84.7 119.0,84.4 121.0,82.2 123.0,82.7 125.0,84.6 127.0,83.4 129.0,84.7 131.0,83.2 133.0,82.4 135.0,83.8 137.0,84.2 139.0,82.9 141.0,82.4 143.0,83.1 145.0,84.7 147.0,84.2 149.0,82.5 151.0,82.8 153.0,82.5 155.0,82.4 157.0,84.3 159.0,82.7 161.0,83.7 163.0,83.4 165.0,82.7 167.0,84.1 169.0,82.5 171.0,83.9 173.0,82.5 175.0,83.3 177.0,82.8 179.0,82.9 181.0,84.7 183.0,84.3 185.0,83.0 187.0,84.5 189.0,82.7 191.0,83.2 193.0,84.4 195.0,83.9 197.0,82.5 199.0,84.8 201.0,82.8 203.0,82.9 205.0,84.2 207.0,83.1 209.0,83.0 211.0,82.4 213.0,82.4 215.0,83.7 217.0,82.8 219.0,83.8 221.0,83.2 223.0,83.4 225.0,84.7 227.0,83.5 229.0,83.7 231.0,84.5 233.0,82.7 235.0,82.6 237.0,84.6 239.0,84.3 241.0,82.8 243.0,82.7 245.0,84.1 247.0,84.6 249.0,82.7 251.0,84.7 253.0,84.5 255.0,83.8 257.0,83.3 259.0,82.5 261.0,82.3 263.0,84.7 265.0,82.8 267.0,84.0 269.0,82.9 271.0,84.3 273.0,83.8 275.0,83.0 277.0,82.7 279.0,84.1 281.0,82.4 283.0,82.8 285.0,83.7 287.0,84.4 289.0,83.8 291.0,82.9 293.0,84.6 295.0,82.7 297.0,82.2 299.0,82.9 301.0,83.4 303.0,82.4 305.0,82.7 307.0,83.2 309.0,83.7 311.0,82.5 313.0,83.1 315.0,84.5 317.0,84.7 319.0,83.9 321.0,84.0 323.0,83.7 325.0,82.6 327.0,82.3 329.0,82.2 331.0,84.6 333.0,84.0 335.0,84.7 337.0,82.3 339.0,83.9 341.0,83.5 343.0,84.1 345.0,83.0 347.0,84.8 349.0,82.4 351.0,83.6 353.0,84.1 355.0,84.5 357.0,84.1 359.0,84.0 361.0,84.3 363.0,84.6 365.0,83.1 367.0,84.0 369.0,84.5 371.0,84.5 373.0,83.3 375.0,84.3 377.0,84.4 379.0,83.7 381.0,83.8 383.0,83.2 385.0,83.7 387.0,83.8 389.0,82.4 391.0,83.9 393.0,84.8 395.0,84.5 397.0,84.1 399.0,83.2 401.0,84.1 403.0,83.7 405.0,83.3 407.0,84.4 409.0,82.4 411.0,84.2 413.0,82.3 415.0,83.8 417.0,83.5 419.0,82.8 421.0,84.0 423.0,83.5 425.0,83.8 427.0,84.6 429.0,82.9 431.0,82.2 433.0,83.0 435.0,84.0 437.0,82.7 439.0,82.6 441.0,84.6 443.0,83.9 445.0,83.3 447.0,84.5 449.0,83.1 451.0,83.9 453.0,82.7 455.0,83.3 457.0,84.3 459.0,84.6 461.0,84.5 462.5,83.5 463.0,73.0 465.0,68.0 469.0,65.0 474.0,64.0 474.0,63.3 476.0,63.7 478.0,63.1 480.0,62.8 482.0,63.5 484.0,64.2 486.4,63.5 486.4,287.0" fill="none" stroke="#ff0000" stroke-width="2"/></svg>
<div style="position:absolute;left:1520px;top:571px;white-space:nowrap;font-family:'Liberation Serif', serif;font-size:12px;line-height:14px;color:#ff0000">HSL1</div>
<div style="position:absolute;left:932px;top:565px;white-space:nowrap;font-family:'Liberation Serif', serif;font-size:12px;line-height:14px;color:#111">146.22</div>
<div style="position:absolute;left:932px;top:620px;white-space:nowrap;font-family:'Liberation Serif', serif;font-size:12px;line-height:14px;color:#111">120.00</div>
<div style="position:absolute;left:932px;top:663px;white-space:nowrap;font-family:'Liberation Serif', serif;font-size:12px;line-height:14px;color:#111">100.00</div>
<div style="position:absolute;left:932px;top:705px;white-space:nowrap;font-family:'Liberation Serif', serif;font-size:12px;line-height:14px;color:#111">80.000</div>
<div style="position:absolute;left:932px;top:748px;white-space:nowrap;font-family:'Liberation Serif', serif;font-size:12px;line-height:14px;color:#111">60.000</div>
<div style="position:absolute;left:932px;top:790px;white-space:nowrap;font-family:'Liberation Serif', serif;font-size:12px;line-height:14px;color:#111">40.000</div>
<div style="position:absolute;left:932px;top:851px;white-space:nowrap;font-family:'Liberation Serif', serif;font-size:12px;line-height:14px;color:#111">10.180</div>
<div style="position:absolute;left:976px;top:863px;white-space:nowrap;font-family:'Liberation Serif', serif;font-size:12px;line-height:14px;color:#111">0.5205</div>
<div style="position:absolute;left:1052px;top:863px;white-space:nowrap;font-family:'Liberation Serif', serif;font-size:12px;line-height:14px;color:#111">20.000</div>
<div style="position:absolute;left:1130px;top:863px;white-space:nowrap;font-family:'Liberation Serif', serif;font-size:12px;line-height:14px;color:#111">40.000</div>
<div style="position:absolute;left:1209px;top:863px;white-space:nowrap;font-family:'Liberation Serif', serif;font-size:12px;line-height:14px;color:#111">60.000</div>
<div style="position:absolute;left:1289px;top:863px;white-space:nowrap;font-family:'Liberation Serif', serif;font-size:12px;line-height:14px;color:#111">80.000</div>
<div style="position:absolute;left:1367px;top:863px;white-space:nowrap;font-family:'Liberation Serif', serif;font-size:12px;line-height:14px;color:#111">100.00</div>
<div style="position:absolute;left:1445px;top:863px;white-space:nowrap;font-family:'Liberation Serif', serif;font-size:12px;line-height:14px;color:#111">120.00</div>
<div style="position:absolute;left:1516px;top:863px;white-space:nowrap;font-family:'Liberation Serif', serif;font-size:12px;line-height:14px;color:#111">137.94</div>
<div style="position:absolute;left:1248px;top:876px;white-space:nowrap;font-family:'Liberation Sans', sans-serif;font-size:12px;line-height:16px;color:#111">*窗体<span style="font-family:Liberation Serif,serif">4</span> 时间<span style="font-family:Liberation Serif,serif;font-size:10px">(s)</span></div>
<div style="position:absolute;left:1515px;top:880px;width:19px;height:16px;background:linear-gradient(#fcfcfc,#dadde2);border:1px solid #505864;border-radius:3px;box-sizing:border-box"></div>
<div style="position:absolute;left:1515px;top:880px;width:19px;text-align:center;white-space:nowrap;font-family:'Liberation Serif', serif;font-size:11px;line-height:15px;color:#111;font-weight:bold">A</div>
<div style="position:absolute;left:1534px;top:880px;width:19px;height:16px;background:linear-gradient(#fcfcfc,#dadde2);border:1px solid #505864;border-radius:3px;box-sizing:border-box"></div>
<div style="position:absolute;left:1534px;top:880px;width:19px;text-align:center;white-space:nowrap;font-family:'Liberation Serif', serif;font-size:11px;line-height:15px;color:#111;font-weight:bold">+</div>
<div style="position:absolute;left:1553px;top:880px;width:19px;height:16px;background:linear-gradient(#fcfcfc,#dadde2);border:1px solid #505864;border-radius:3px;box-sizing:border-box"></div>
<div style="position:absolute;left:1553px;top:880px;width:19px;text-align:center;white-space:nowrap;font-family:'Liberation Serif', serif;font-size:11px;line-height:15px;color:#111;font-weight:bold">-</div>
<div style="position:absolute;left:274px;top:898px;width:1303px;height:2px;background:#fff"></div></body></html>
